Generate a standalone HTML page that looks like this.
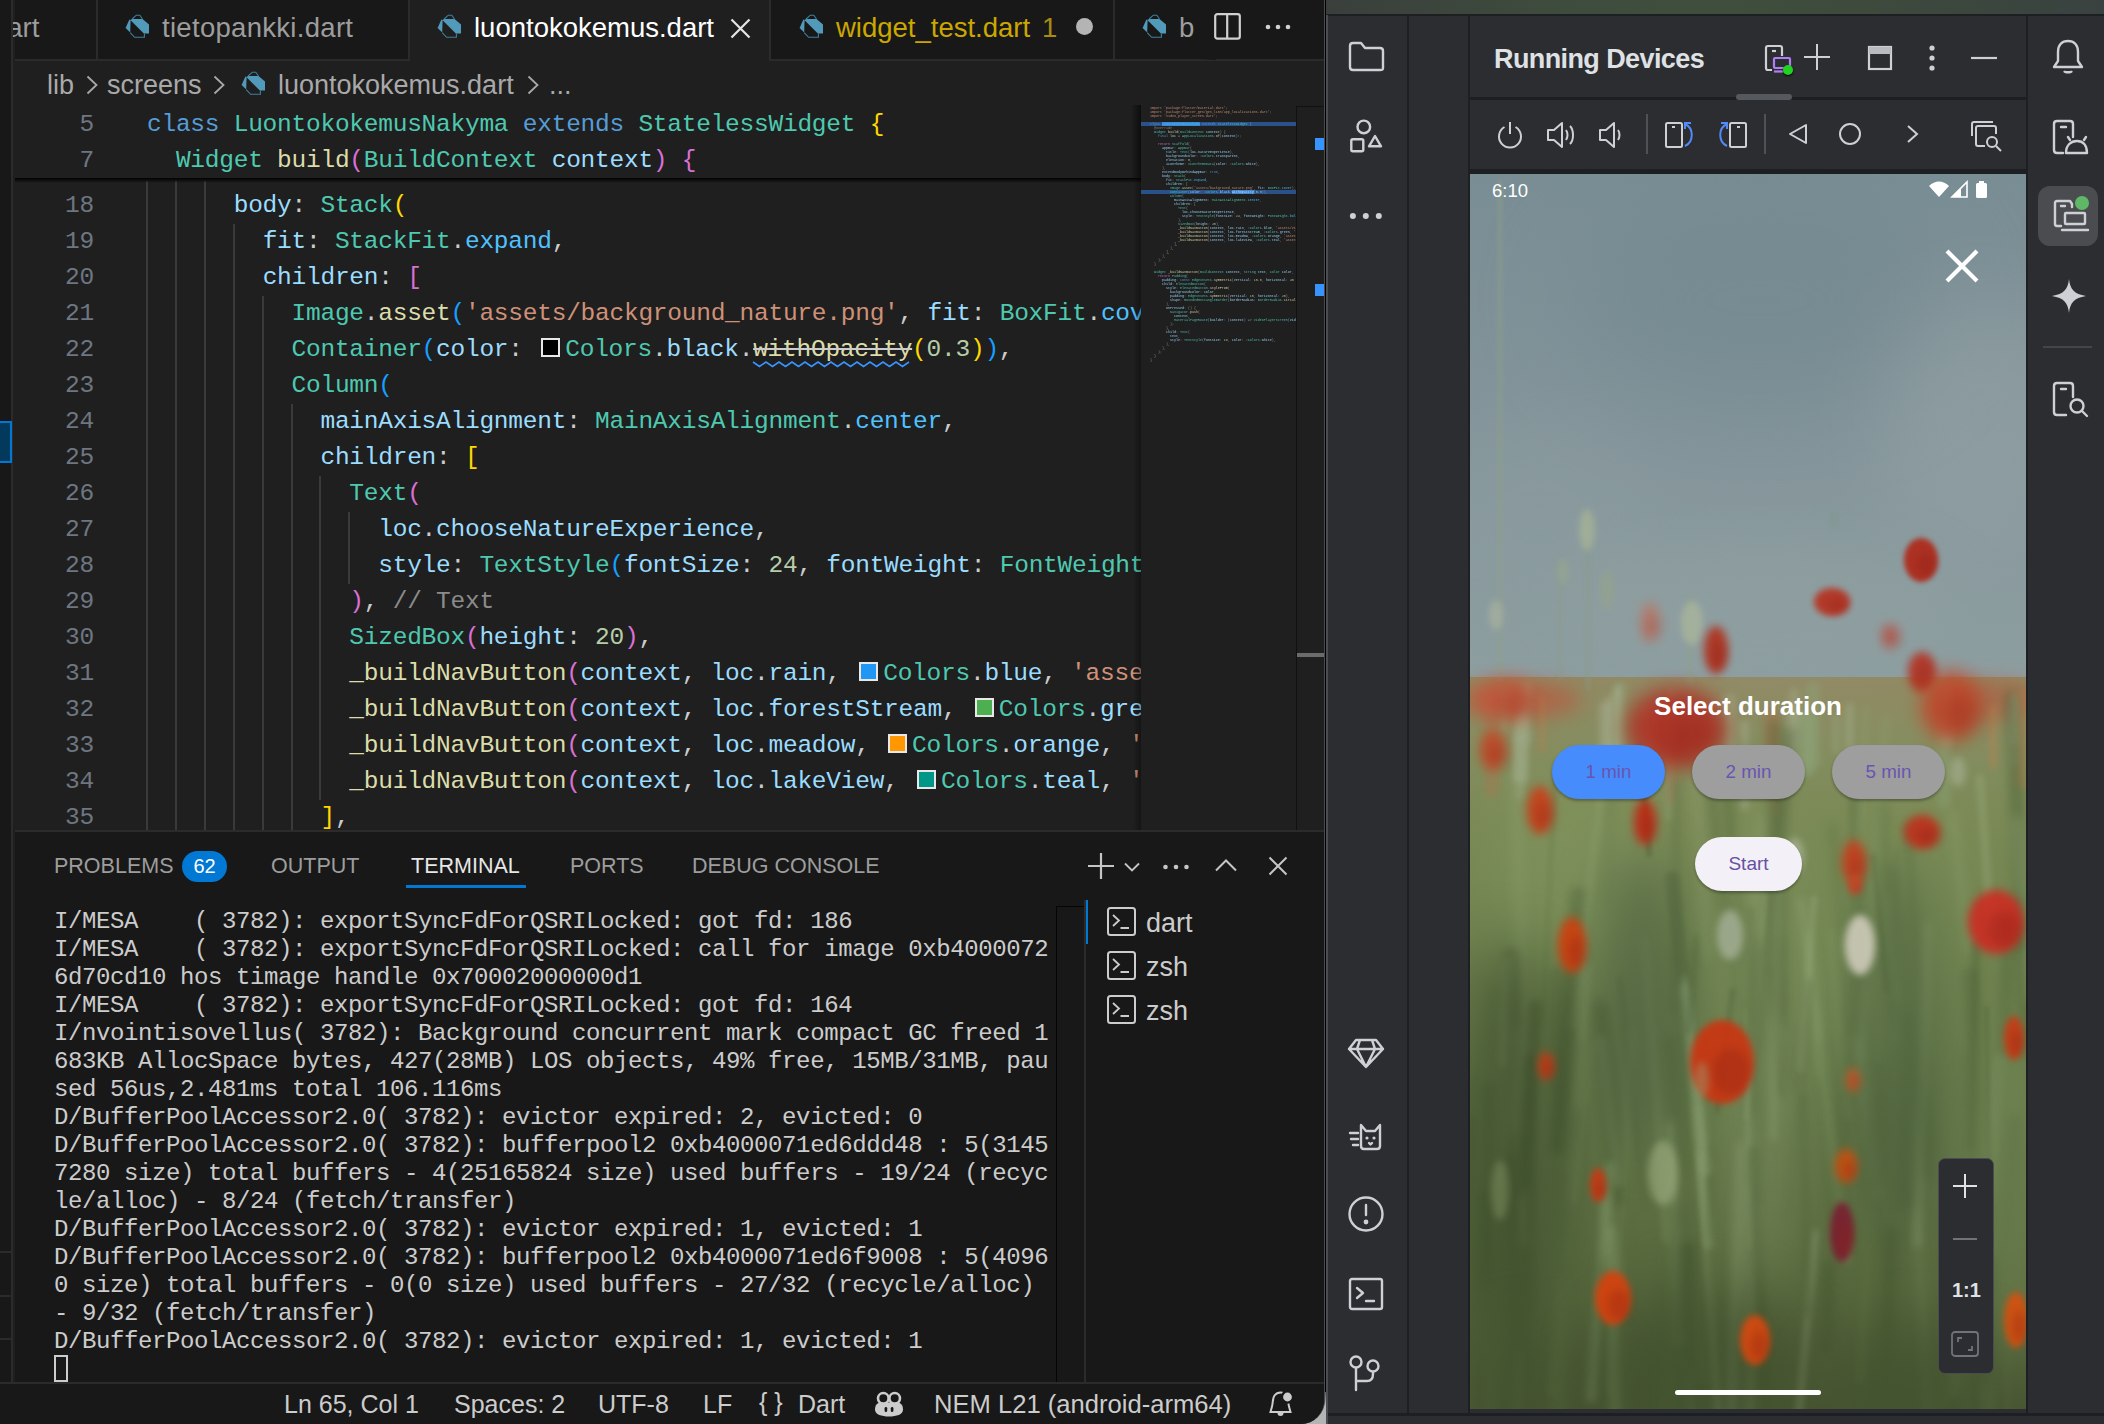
<!DOCTYPE html><html><head><meta charset="utf-8"><style>
*{box-sizing:border-box;margin:0;padding:0}
html,body{width:2104px;height:1424px;overflow:hidden;background:#000}
body{position:relative;font-family:"Liberation Sans", sans-serif}
.a{position:absolute}
.code{position:absolute;font-family:"Liberation Mono", monospace;font-size:24.5px;letter-spacing:-0.25px;white-space:pre;color:#cccccc;line-height:36px;height:36px}
.ln{position:absolute;font-family:"Liberation Mono", monospace;font-size:24.5px;letter-spacing:-0.25px;color:#6e7681;text-align:right;width:80px;line-height:36px;height:36px}
.k{color:#569cd6} .t{color:#4ec9b0} .f{color:#dcdcaa} .v{color:#9cdcfe} .s{color:#ce9178}
.n{color:#b5cea8} .c{color:#8b8b8b} .e{color:#4fc1ff}
.b1{color:#ffd700} .b2{color:#da70d6} .b3{color:#179fff}
.sw{display:inline-block;width:28px;height:20px;vertical-align:-2px;position:relative}
.sw i{position:absolute;left:4px;top:0;width:19px;height:19px;border:2px solid #e8e8e8}
.wo{text-decoration:line-through;text-decoration-color:#cccccc;text-decoration-thickness:2px}
.term{position:absolute;font-family:"Liberation Mono", monospace;font-size:24px;letter-spacing:-0.4px;white-space:pre;color:#cccccc;line-height:28px}
.ui{position:absolute;font-family:"Liberation Sans", sans-serif;white-space:pre}
.ic{position:absolute;overflow:visible}
.mm{position:absolute;font-family:"Liberation Mono", monospace;font-size:3.4px;letter-spacing:-0.04px;line-height:4px;white-space:pre;color:#9a9a9a}
.mm div{height:4px}
</style></head><body>
<div class="a" style="left:1296px;top:1392px;width:30px;height:32px;background:linear-gradient(180deg,#5a5a5a,#b4b4b4 40%)"></div>
<div class="a" style="left:0;top:0;width:1325px;height:1424px;background:#1f1f1f;border-bottom-right-radius:24px;overflow:hidden;border-right:1px solid #4a4a4a">
<div class="a" style="left:0;top:0;width:13px;height:1424px;background:#181818;border-right:2px solid #2b2b2b"></div>
<div class="a" style="left:0;top:421px;width:12px;height:42px;background:#04395e;border:2px solid #0078d4;border-left:none"></div>
<div class="a" style="left:0;top:1251px;width:12px;height:2px;background:#2b2b2b"></div>
<div class="a" style="left:0;top:1295px;width:12px;height:2px;background:#2b2b2b"></div>
<div class="a" style="left:0;top:1338px;width:12px;height:2px;background:#2b2b2b"></div>
<div class="a" style="left:15px;top:0;width:1310px;height:61px;background:#181818;border-bottom:2px solid #2b2b2b"></div>
<div class="a" style="left:96px;top:0;width:2px;height:60px;background:#2b2b2b"></div>
<div class="a" style="left:1113px;top:0;width:2px;height:60px;background:#2b2b2b"></div>
<div class="a" style="left:408px;top:0;width:363px;height:61px;background:#1f1f1f;border-left:2px solid #2b2b2b;border-right:2px solid #2b2b2b"></div>
<div class="ui" style="left:-8px;top:11px;font-size:27.5px;color:#9d9d9d;line-height:34px">dart</div>
<div class="a" style="left:0;top:0;width:13px;height:60px;background:#181818;border-right:2px solid #2b2b2b"></div>
<svg class="ic" style="left:120px;top:10px" width="36" height="32" viewBox="0 0 36 32"><path d="M10.3 9.9 L12.1 9 L22.5 9 L29 14.4 L29 23.6 L23.8 23.6 Z" fill="#519aba"/><path d="M9.4 9.4 L10.6 9.9 L10.2 22.6 L5.6 18 Z" fill="#519aba"/><path d="M12.1 9 L16.3 5.2 L19.8 5.2 L22.5 9 M10.2 22.6 L14.6 27.3 L24.4 27.3 L24.4 23.6" fill="none" stroke="#3f7f9c" stroke-width="1.1"/></svg>
<div class="ui" style="left:162px;top:11px;font-size:27.5px;color:#9d9d9d;line-height:34px;letter-spacing:0.3px">tietopankki.dart</div>
<svg class="ic" style="left:432px;top:10px" width="36" height="32" viewBox="0 0 36 32"><path d="M10.3 9.9 L12.1 9 L22.5 9 L29 14.4 L29 23.6 L23.8 23.6 Z" fill="#519aba"/><path d="M9.4 9.4 L10.6 9.9 L10.2 22.6 L5.6 18 Z" fill="#519aba"/><path d="M12.1 9 L16.3 5.2 L19.8 5.2 L22.5 9 M10.2 22.6 L14.6 27.3 L24.4 27.3 L24.4 23.6" fill="none" stroke="#3f7f9c" stroke-width="1.1"/></svg>
<div class="ui" style="left:474px;top:11px;font-size:27.5px;color:#ffffff;line-height:34px">luontokokemus.dart</div>
<svg class="ic" style="left:730px;top:18px" width="21" height="21" viewBox="0 0 21 21"><path d="M1.5 1.5L19.5 19.5M19.5 1.5L1.5 19.5" stroke="#e6e6e6" stroke-width="2.2"/></svg>
<svg class="ic" style="left:794px;top:10px" width="36" height="32" viewBox="0 0 36 32"><path d="M10.3 9.9 L12.1 9 L22.5 9 L29 14.4 L29 23.6 L23.8 23.6 Z" fill="#519aba"/><path d="M9.4 9.4 L10.6 9.9 L10.2 22.6 L5.6 18 Z" fill="#519aba"/><path d="M12.1 9 L16.3 5.2 L19.8 5.2 L22.5 9 M10.2 22.6 L14.6 27.3 L24.4 27.3 L24.4 23.6" fill="none" stroke="#3f7f9c" stroke-width="1.1"/></svg>
<div class="ui" style="left:836px;top:11px;font-size:27.5px;color:#cca700;line-height:34px">widget_test.dart</div>
<div class="ui" style="left:1042px;top:11px;font-size:27.5px;color:#a98c10;line-height:34px">1</div>
<div class="a" style="left:1076px;top:18px;width:17px;height:17px;border-radius:50%;background:#b4b4b4"></div>
<svg class="ic" style="left:1137px;top:10px" width="36" height="32" viewBox="0 0 36 32"><path d="M10.3 9.9 L12.1 9 L22.5 9 L29 14.4 L29 23.6 L23.8 23.6 Z" fill="#519aba"/><path d="M9.4 9.4 L10.6 9.9 L10.2 22.6 L5.6 18 Z" fill="#519aba"/><path d="M12.1 9 L16.3 5.2 L19.8 5.2 L22.5 9 M10.2 22.6 L14.6 27.3 L24.4 27.3 L24.4 23.6" fill="none" stroke="#3f7f9c" stroke-width="1.1"/></svg>
<div class="ui" style="left:1179px;top:11px;font-size:27.5px;color:#9d9d9d;line-height:34px">b</div>
<div class="a" style="left:1196px;top:0;width:20px;height:60px;background:linear-gradient(90deg,rgba(24,24,24,0),#181818)"></div>
<svg class="ic" style="left:1214px;top:13px" width="27" height="27" viewBox="0 0 27 27"><rect x="1.2" y="1.2" width="24.6" height="24.4" rx="2.2" fill="none" stroke="#d0d0d0" stroke-width="2.2"/><path d="M13.2 2V26" stroke="#d0d0d0" stroke-width="2.2"/></svg>
<svg class="ic" style="left:1264px;top:23px" width="30" height="8" viewBox="0 0 30 8"><circle cx="4" cy="4" r="2.3" fill="#d0d0d0"/><circle cx="14" cy="4" r="2.3" fill="#d0d0d0"/><circle cx="24" cy="4" r="2.3" fill="#d0d0d0"/></svg>
<div class="ui" style="left:47px;top:69px;font-size:27px;color:#a9a9a9;line-height:32px">lib</div>
<svg class="ic" style="left:86px;top:75px" width="12" height="20" viewBox="0 0 12 20"><path d="M1.5 1.5L10.5 10L1.5 18.5" fill="none" stroke="#a9a9a9" stroke-width="1.8"/></svg>
<div class="ui" style="left:107px;top:69px;font-size:27px;color:#a9a9a9;line-height:32px">screens</div>
<svg class="ic" style="left:213px;top:75px" width="12" height="20" viewBox="0 0 12 20"><path d="M1.5 1.5L10.5 10L1.5 18.5" fill="none" stroke="#a9a9a9" stroke-width="1.8"/></svg>
<svg class="ic" style="left:236px;top:67px" width="36" height="32" viewBox="0 0 36 32"><path d="M10.3 9.9 L12.1 9 L22.5 9 L29 14.4 L29 23.6 L23.8 23.6 Z" fill="#519aba"/><path d="M9.4 9.4 L10.6 9.9 L10.2 22.6 L5.6 18 Z" fill="#519aba"/><path d="M12.1 9 L16.3 5.2 L19.8 5.2 L22.5 9 M10.2 22.6 L14.6 27.3 L24.4 27.3 L24.4 23.6" fill="none" stroke="#3f7f9c" stroke-width="1.1"/></svg>
<div class="ui" style="left:278px;top:69px;font-size:27px;color:#a9a9a9;line-height:32px">luontokokemus.dart</div>
<svg class="ic" style="left:527px;top:75px" width="12" height="20" viewBox="0 0 12 20"><path d="M1.5 1.5L10.5 10L1.5 18.5" fill="none" stroke="#a9a9a9" stroke-width="1.8"/></svg>
<div class="ui" style="left:549px;top:69px;font-size:27px;color:#a9a9a9;line-height:32px">...</div>
<div class="a" style="left:15px;top:181px;width:1126px;height:650px;overflow:hidden">
<div class="a" style="left:131.0px;top:0px;width:2px;height:655px;background:#3a3a3a"></div>
<div class="a" style="left:159.9px;top:0px;width:2px;height:655px;background:#3a3a3a"></div>
<div class="a" style="left:188.8px;top:0px;width:2px;height:655px;background:#3a3a3a"></div>
<div class="a" style="left:217.7px;top:43px;width:2px;height:612px;background:#3a3a3a"></div>
<div class="a" style="left:246.6px;top:115px;width:2px;height:540px;background:#3a3a3a"></div>
<div class="a" style="left:275.5px;top:223px;width:2px;height:432px;background:#3a3a3a"></div>
<div class="a" style="left:304.4px;top:295px;width:2px;height:324px;background:#3a3a3a"></div>
<div class="a" style="left:333.3px;top:331px;width:2px;height:72px;background:#3a3a3a"></div>
<div class="ln" style="left:-1px;top:7px">18</div>
<div class="code" style="left:132px;top:7px">      <span class="v">body</span>: <span class="t">Stack</span><span class="b1">(</span></div>
<div class="ln" style="left:-1px;top:43px">19</div>
<div class="code" style="left:132px;top:43px">        <span class="v">fit</span>: <span class="t">StackFit</span>.<span class="e">expand</span>,</div>
<div class="ln" style="left:-1px;top:79px">20</div>
<div class="code" style="left:132px;top:79px">        <span class="v">children</span>: <span class="b2">[</span></div>
<div class="ln" style="left:-1px;top:115px">21</div>
<div class="code" style="left:132px;top:115px">          <span class="t">Image</span>.<span class="f">asset</span><span class="b3">(</span><span class="s">&#x27;assets/background_nature.png&#x27;</span>, <span class="v">fit</span>: <span class="t">BoxFit</span>.<span class="e">cover</span><span class="b3">)</span>,</div>
<div class="ln" style="left:-1px;top:151px">22</div>
<div class="code" style="left:132px;top:151px">          <span class="t">Container</span><span class="b3">(</span><span class="v">color</span>: <span class="sw"><i style="background:#000000"></i></span><span class="t">Colors</span>.<span class="v">black</span>.<span class="f wo">withOpacity</span><span class="b1">(</span><span class="n">0.3</span><span class="b1">)</span><span class="b3">)</span>,</div>
<div class="ln" style="left:-1px;top:187px">23</div>
<div class="code" style="left:132px;top:187px">          <span class="t">Column</span><span class="b3">(</span></div>
<div class="ln" style="left:-1px;top:223px">24</div>
<div class="code" style="left:132px;top:223px">            <span class="v">mainAxisAlignment</span>: <span class="t">MainAxisAlignment</span>.<span class="e">center</span>,</div>
<div class="ln" style="left:-1px;top:259px">25</div>
<div class="code" style="left:132px;top:259px">            <span class="v">children</span>: <span class="b1">[</span></div>
<div class="ln" style="left:-1px;top:295px">26</div>
<div class="code" style="left:132px;top:295px">              <span class="t">Text</span><span class="b2">(</span></div>
<div class="ln" style="left:-1px;top:331px">27</div>
<div class="code" style="left:132px;top:331px">                <span class="v">loc</span>.<span class="v">chooseNatureExperience</span>,</div>
<div class="ln" style="left:-1px;top:367px">28</div>
<div class="code" style="left:132px;top:367px">                <span class="v">style</span>: <span class="t">TextStyle</span><span class="b3">(</span><span class="v">fontSize</span>: <span class="n">24</span>, <span class="v">fontWeight</span>: <span class="t">FontWeight</span>.<span class="e">bold</span></div>
<div class="ln" style="left:-1px;top:403px">29</div>
<div class="code" style="left:132px;top:403px">              <span class="b2">)</span>, <span class="c">// Text</span></div>
<div class="ln" style="left:-1px;top:439px">30</div>
<div class="code" style="left:132px;top:439px">              <span class="t">SizedBox</span><span class="b2">(</span><span class="v">height</span>: <span class="n">20</span><span class="b2">)</span>,</div>
<div class="ln" style="left:-1px;top:475px">31</div>
<div class="code" style="left:132px;top:475px">              <span class="f">_buildNavButton</span><span class="b2">(</span><span class="v">context</span>, <span class="v">loc</span>.<span class="v">rain</span>, <span class="sw"><i style="background:#2196f3"></i></span><span class="t">Colors</span>.<span class="v">blue</span>, <span class="s">&#x27;assets/videos&#x27;</span></div>
<div class="ln" style="left:-1px;top:511px">32</div>
<div class="code" style="left:132px;top:511px">              <span class="f">_buildNavButton</span><span class="b2">(</span><span class="v">context</span>, <span class="v">loc</span>.<span class="v">forestStream</span>, <span class="sw"><i style="background:#4caf50"></i></span><span class="t">Colors</span>.<span class="v">green</span></div>
<div class="ln" style="left:-1px;top:547px">33</div>
<div class="code" style="left:132px;top:547px">              <span class="f">_buildNavButton</span><span class="b2">(</span><span class="v">context</span>, <span class="v">loc</span>.<span class="v">meadow</span>, <span class="sw"><i style="background:#ff9800"></i></span><span class="t">Colors</span>.<span class="v">orange</span>, <span class="s">&#x27;assets&#x27;</span></div>
<div class="ln" style="left:-1px;top:583px">34</div>
<div class="code" style="left:132px;top:583px">              <span class="f">_buildNavButton</span><span class="b2">(</span><span class="v">context</span>, <span class="v">loc</span>.<span class="v">lakeView</span>, <span class="sw"><i style="background:#009688"></i></span><span class="t">Colors</span>.<span class="v">teal</span>, <span class="s">&#x27;assets&#x27;</span></div>
<div class="ln" style="left:-1px;top:619px">35</div>
<div class="code" style="left:132px;top:619px">            <span class="b1">]</span>,</div>
<svg class="ic" style="left:738.0px;top:180px" width="159" height="6" viewBox="0 0 159 6"><path d="M0.0 1 L6.5 5.5 L13.0 1 L19.5 5.5 L26.0 1 L32.5 5.5 L39.0 1 L45.5 5.5 L52.0 1 L58.5 5.5 L65.0 1 L71.5 5.5 L78.0 1 L84.5 5.5 L91.0 1 L97.5 5.5 L104.0 1 L110.5 5.5 L117.0 1 L123.5 5.5 L130.0 1 L136.5 5.5 L143.0 1 L149.5 5.5 L156.0 1" fill="none" stroke="#3794ff" stroke-width="1.6"/></svg>
</div>
<div class="a" style="left:15px;top:105px;width:1126px;height:73px;background:#1f1f1f"></div>
<div class="a" style="left:15px;top:178px;width:1126px;height:5px;background:linear-gradient(180deg,rgba(0,0,0,0.95),rgba(0,0,0,0))"></div>
<div class="ln" style="left:14px;top:107px">5</div>
<div class="code" style="left:147px;top:107px"><span class="k">class</span> <span class="t">LuontokokemusNakyma</span> <span class="k">extends</span> <span class="t">StatelessWidget</span> <span class="b1">{</span></div>
<div class="ln" style="left:14px;top:143px">7</div>
<div class="code" style="left:147px;top:143px">  <span class="t">Widget</span> <span class="f">build</span><span class="b2">(</span><span class="t">BuildContext</span> <span class="v">context</span><span class="b2">)</span> <span class="b2">{</span></div>
<div class="a" style="left:1141px;top:105px;width:156px;height:726px;background:#1f1f1f;overflow:hidden">
<div class="a" style="left:0;top:17px;width:155px;height:4px;background:#2a5189"></div>
<div class="a" style="left:21px;top:17px;width:38px;height:4px;background:#3b86e0"></div>
<div class="a" style="left:0;top:85px;width:155px;height:4px;background:#2a5189"></div>
<div class="a" style="left:91px;top:85px;width:22px;height:4px;background:#3b86e0"></div>
<div class="mm" style="left:9px;top:0.5px;opacity:0.9"><div><span class="s">import &#x27;package:flutter/material.dart&#x27;;</span></div><div><span class="s">import &#x27;package:flutter_gen/gen_l10n/app_localizations.dart&#x27;;</span></div><div><span class="s">import &#x27;video_player_screen.dart&#x27;;</span></div><div></div><div><span class="k">class</span> <span class="t">LuontokokemusNakyma</span> <span class="k">extends</span> <span class="t">StatelessWidget</span> {</div><div>  <span class="c">@override</span></div><div>  <span class="t">Widget</span> <span class="f">build</span>(<span class="t">BuildContext</span> <span class="v">context</span>) {</div><div>    <span class="k">final</span> <span class="v">loc</span> = <span class="t">AppLocalizations</span>.<span class="f">of</span>(<span class="v">context</span>)!;</div><div></div><div>    <span class="b2">return</span> <span class="t">Scaffold</span>(</div><div>      <span class="v">appBar</span>: <span class="t">AppBar</span>(</div><div>        <span class="v">title</span>: <span class="t">Text</span>(<span class="v">loc.natureExperience</span>),</div><div>        <span class="v">backgroundColor</span>: <span class="c">#</span><span class="t">Colors</span>.<span class="v">transparent</span>,</div><div>        <span class="v">elevation</span>: <span class="n">0</span>,</div><div>        <span class="v">iconTheme</span>: <span class="t">IconThemeData</span>(<span class="v">color</span>: <span class="c">#</span><span class="t">Colors</span>.<span class="v">white</span>),</div><div>      ),</div><div>      <span class="v">extendBodyBehindAppBar</span>: <span class="k">true</span>,</div><div>      <span class="v">body</span>: <span class="t">Stack</span>(</div><div>        <span class="v">fit</span>: <span class="t">StackFit</span>.<span class="e">expand</span>,</div><div>        <span class="v">children</span>: [</div><div>          <span class="t">Image</span>.<span class="f">asset</span>(<span class="s">&#x27;assets/background_nature.png&#x27;</span>, <span class="v">fit</span>: <span class="t">BoxFit</span>.<span class="e">cover</span>),</div><div>          <span class="t">Container</span>(<span class="v">color</span>: <span class="c">#</span><span class="t">Colors</span>.<span class="v">black</span>.<span class="f">withOpacity</span>(<span class="n">0.3</span>)),</div><div>          <span class="t">Column</span>(</div><div>            <span class="v">mainAxisAlignment</span>: <span class="t">MainAxisAlignment</span>.<span class="e">center</span>,</div><div>            <span class="v">children</span>: [</div><div>              <span class="t">Text</span>(</div><div>                <span class="v">loc.chooseNatureExperience</span>,</div><div>                <span class="v">style</span>: <span class="t">TextStyle</span>(<span class="v">fontSize</span>: <span class="n">24</span>, <span class="v">fontWeight</span>: <span class="t">FontWeight</span>.<span class="e">bold</span>, color</div><div>              ),</div><div>              <span class="t">SizedBox</span>(<span class="v">height</span>: <span class="n">20</span>),</div><div>              <span class="f">_buildNavButton</span>(<span class="v">context</span>, <span class="v">loc.rain</span>, <span class="c">#</span><span class="t">Colors</span>.<span class="v">blue</span>, <span class="s">&#x27;assets/vid</span></div><div>              <span class="f">_buildNavButton</span>(<span class="v">context</span>, <span class="v">loc.forestStream</span>, <span class="c">#</span><span class="t">Colors</span>.<span class="v">green</span>, <span class="s">&#x27;</span></div><div>              <span class="f">_buildNavButton</span>(<span class="v">context</span>, <span class="v">loc.meadow</span>, <span class="c">#</span><span class="t">Colors</span>.<span class="v">orange</span>, <span class="s">&#x27;asset</span></div><div>              <span class="f">_buildNavButton</span>(<span class="v">context</span>, <span class="v">loc.lakeView</span>, <span class="c">#</span><span class="t">Colors</span>.<span class="v">teal</span>, <span class="s">&#x27;asset</span></div><div>            ],</div><div>          ),</div><div>        ],</div><div>      ),</div><div>    );</div><div>  }</div><div></div><div>  <span class="t">Widget</span> <span class="f">_buildNavButton</span>(<span class="t">BuildContext</span> <span class="v">context</span>, <span class="t">String</span> <span class="v">text</span>, <span class="t">Color</span> <span class="v">color</span>, </div><div>    <span class="b2">return</span> <span class="t">Padding</span>(</div><div>      <span class="v">padding</span>: <span class="k">const</span> <span class="t">EdgeInsets</span>.<span class="f">symmetric</span>(<span class="v">vertical</span>: <span class="n">10.0</span>, <span class="v">horizontal</span>: <span class="n">40</span></div><div>      <span class="v">child</span>: <span class="t">ElevatedButton</span>(</div><div>        <span class="v">style</span>: <span class="t">ElevatedButton</span>.<span class="f">styleFrom</span>(</div><div>          <span class="v">backgroundColor</span>: <span class="v">color</span>,</div><div>          <span class="v">padding</span>: <span class="t">EdgeInsets</span>.<span class="f">symmetric</span>(<span class="v">vertical</span>: <span class="n">15</span>, <span class="v">horizontal</span>: <span class="n">20</span>),</div><div>          <span class="v">shape</span>: <span class="t">RoundedRectangleBorder</span>(<span class="v">borderRadius</span>: <span class="t">BorderRadius</span>.<span class="f">circular</span></div><div>        ),</div><div>        <span class="v">onPressed</span>: () {</div><div>          <span class="t">Navigator</span>.<span class="f">push</span>(</div><div>            <span class="v">context</span>,</div><div>            <span class="t">MaterialPageRoute</span>(<span class="v">builder</span>: (<span class="v">context</span>) =&gt; <span class="t">VideoPlayerScreen</span>(<span class="v">vid</span></div><div>          );</div><div>        },</div><div>        <span class="v">child</span>: <span class="t">Text</span>(</div><div>          <span class="v">text</span>,</div><div>          <span class="v">style</span>: <span class="t">TextStyle</span>(<span class="v">fontSize</span>: <span class="n">18</span>, <span class="v">color</span>: <span class="c">#</span><span class="t">Colors</span>.<span class="v">white</span>),</div><div>        ),</div><div>      ),</div><div>    );</div><div>  }</div><div>}</div></div>
</div>
<div class="a" style="left:1131px;top:105px;width:10px;height:73px;background:linear-gradient(90deg,rgba(0,0,0,0),rgba(0,0,0,0.6))"></div>
<div class="a" style="left:1133px;top:178px;width:8px;height:652px;background:linear-gradient(90deg,rgba(0,0,0,0),rgba(0,0,0,0.35))"></div>
<div class="a" style="left:1296px;top:106px;width:29px;height:725px;background:#1f1f1f;border-left:1px solid #111;border-top:1px solid #111"></div>
<div class="a" style="left:1315px;top:138px;width:9px;height:12px;background:#3794ff"></div>
<div class="a" style="left:1315px;top:284px;width:9px;height:12px;background:#3794ff"></div>
<div class="a" style="left:1297px;top:653px;width:27px;height:4px;background:#6b6b6b"></div>
<div class="a" style="left:15px;top:830px;width:1310px;height:553px;background:#181818;border-top:2px solid #2b2b2b"></div>
<div class="ui" style="left:54px;top:852px;font-size:21.5px;color:#9d9d9d;line-height:28px">PROBLEMS</div>
<div class="ui" style="left:271px;top:852px;font-size:21.5px;color:#9d9d9d;line-height:28px">OUTPUT</div>
<div class="ui" style="left:411px;top:852px;font-size:21.5px;color:#e7e7e7;line-height:28px">TERMINAL</div>
<div class="ui" style="left:570px;top:852px;font-size:21.5px;color:#9d9d9d;line-height:28px">PORTS</div>
<div class="ui" style="left:692px;top:852px;font-size:21.5px;color:#9d9d9d;line-height:28px">DEBUG CONSOLE</div>
<div class="a" style="left:182px;top:851px;width:45px;height:31px;border-radius:16px;background:#0078d4;color:#fff;font-size:20px;line-height:31px;text-align:center;font-family:'Liberation Sans'">62</div>
<div class="a" style="left:406px;top:885px;width:120px;height:3px;background:#0078d4"></div>
<svg class="ic" style="left:1088px;top:853px" width="26" height="26" viewBox="0 0 26 26"><path d="M13 0V26M0 13H26" stroke="#c5c5c5" stroke-width="2.2"/></svg>
<svg class="ic" style="left:1124px;top:862px" width="16" height="10" viewBox="0 0 16 10"><path d="M1 1.5L8 8.5L15 1.5" fill="none" stroke="#c5c5c5" stroke-width="1.8"/></svg>
<svg class="ic" style="left:1162px;top:863px" width="28" height="8" viewBox="0 0 28 8"><circle cx="3.5" cy="4" r="2.3" fill="#c5c5c5"/><circle cx="14" cy="4" r="2.3" fill="#c5c5c5"/><circle cx="24.5" cy="4" r="2.3" fill="#c5c5c5"/></svg>
<svg class="ic" style="left:1215px;top:859px" width="22" height="13" viewBox="0 0 22 13"><path d="M1 11.5L11 1.5L21 11.5" fill="none" stroke="#c5c5c5" stroke-width="2"/></svg>
<svg class="ic" style="left:1268px;top:856px" width="20" height="20" viewBox="0 0 20 20"><path d="M1.5 1.5L18.5 18.5M18.5 1.5L1.5 18.5" stroke="#c5c5c5" stroke-width="2"/></svg>
<div class="term" style="left:54px;top:908px">I/MESA    ( 3782): exportSyncFdForQSRILocked: got fd: 186
I/MESA    ( 3782): exportSyncFdForQSRILocked: call for image 0xb4000072
6d70cd10 hos timage handle 0x70002000000d1
I/MESA    ( 3782): exportSyncFdForQSRILocked: got fd: 164
I/nvointisovellus( 3782): Background concurrent mark compact GC freed 1
683KB AllocSpace bytes, 427(28MB) LOS objects, 49% free, 15MB/31MB, pau
sed 56us,2.481ms total 106.116ms
D/BufferPoolAccessor2.0( 3782): evictor expired: 2, evicted: 0
D/BufferPoolAccessor2.0( 3782): bufferpool2 0xb4000071ed6ddd48 : 5(3145
7280 size) total buffers - 4(25165824 size) used buffers - 19/24 (recyc
le/alloc) - 8/24 (fetch/transfer)
D/BufferPoolAccessor2.0( 3782): evictor expired: 1, evicted: 1
D/BufferPoolAccessor2.0( 3782): bufferpool2 0xb4000071ed6f9008 : 5(4096
0 size) total buffers - 0(0 size) used buffers - 27/32 (recycle/alloc)
- 9/32 (fetch/transfer)
D/BufferPoolAccessor2.0( 3782): evictor expired: 1, evicted: 1</div>
<div class="a" style="left:54px;top:1355px;width:14px;height:27px;border:2px solid #cccccc"></div>
<div class="a" style="left:1056px;top:906px;width:29px;height:477px;border-left:1px solid #050505;border-top:1px solid #050505"></div>
<div class="a" style="left:1084px;top:900px;width:2px;height:483px;background:#2b2b2b"></div>
<div class="a" style="left:1086px;top:900px;width:2px;height:44px;background:#0078d4"></div>
<svg class="ic" style="left:1107px;top:907px" width="29" height="29" viewBox="0 0 29 29"><rect x="1" y="1" width="27" height="27" rx="2.5" fill="none" stroke="#cccccc" stroke-width="2"/><path d="M6 8L12 13.5L6 19" fill="none" stroke="#cccccc" stroke-width="1.8"/><path d="M13.5 21H22" stroke="#cccccc" stroke-width="2"/></svg>
<div class="ui" style="left:1146px;top:906px;font-size:27px;color:#cccccc;line-height:34px">dart</div>
<svg class="ic" style="left:1107px;top:951px" width="29" height="29" viewBox="0 0 29 29"><rect x="1" y="1" width="27" height="27" rx="2.5" fill="none" stroke="#cccccc" stroke-width="2"/><path d="M6 8L12 13.5L6 19" fill="none" stroke="#cccccc" stroke-width="1.8"/><path d="M13.5 21H22" stroke="#cccccc" stroke-width="2"/></svg>
<div class="ui" style="left:1146px;top:950px;font-size:27px;color:#cccccc;line-height:34px">zsh</div>
<svg class="ic" style="left:1107px;top:995px" width="29" height="29" viewBox="0 0 29 29"><rect x="1" y="1" width="27" height="27" rx="2.5" fill="none" stroke="#cccccc" stroke-width="2"/><path d="M6 8L12 13.5L6 19" fill="none" stroke="#cccccc" stroke-width="1.8"/><path d="M13.5 21H22" stroke="#cccccc" stroke-width="2"/></svg>
<div class="ui" style="left:1146px;top:994px;font-size:27px;color:#cccccc;line-height:34px">zsh</div>
<div class="a" style="left:0;top:1382px;width:1325px;height:42px;background:#181818;border-top:2px solid #2b2b2b"></div>
<div class="ui" style="left:284px;top:1389px;font-size:25px;color:#cccccc;line-height:30px">Ln 65, Col 1</div>
<div class="ui" style="left:454px;top:1389px;font-size:25px;color:#cccccc;line-height:30px">Spaces: 2</div>
<div class="ui" style="left:598px;top:1389px;font-size:25px;color:#cccccc;line-height:30px">UTF-8</div>
<div class="ui" style="left:703px;top:1389px;font-size:25px;color:#cccccc;line-height:30px">LF</div>
<div class="ui" style="left:798px;top:1389px;font-size:25px;color:#cccccc;line-height:30px">Dart</div>
<div class="ui" style="left:934px;top:1389px;font-size:25.6px;color:#cccccc;line-height:30px">NEM L21 (android-arm64)</div>
<div class="ui" style="left:759px;top:1387px;font-size:25px;color:#cccccc;line-height:30px">{ }</div>
<svg class="ic" style="left:873px;top:1390px" width="32" height="28" viewBox="0 0 32 28"><path d="M2 19.5 C2 15 4.5 12.5 8 12.5 L24 12.5 C27.5 12.5 30 15 30 19.5 C30 24.5 23.5 26.5 16 26.5 C8.5 26.5 2 24.5 2 19.5 Z" fill="#cccccc"/><circle cx="10.3" cy="8.3" r="5.3" fill="#181818" stroke="#cccccc" stroke-width="2.6"/><circle cx="21.7" cy="8.3" r="5.3" fill="#181818" stroke="#cccccc" stroke-width="2.6"/><rect x="11.6" y="17" width="2.6" height="5" rx="1.3" fill="#181818"/><rect x="17.8" y="17" width="2.6" height="5" rx="1.3" fill="#181818"/></svg>
<svg class="ic" style="left:1266px;top:1388px" width="30" height="32" viewBox="0 0 30 32"><path d="M4.5 24 L24.5 24 L23 18.5 C22 15 22.5 10 20.5 7.5 C19 5.5 17 4.5 14.5 4.5 C12 4.5 10 5.5 8.5 7.5 C6.5 10 7 15 6 18.5 Z" fill="none" stroke="#cccccc" stroke-width="2"/><path d="M11.5 25 A3 3 0 0 0 17.5 25 Z" fill="#cccccc"/><circle cx="21.5" cy="9" r="5.6" fill="#cccccc" stroke="#181818" stroke-width="2.4"/></svg>
</div>
<div class="a" style="left:1326px;top:0;width:778px;height:1424px;background:#2b2d30">
<div class="a" style="left:0;top:0;width:778px;height:15px;background:linear-gradient(90deg,#3a3f3c,#3e4c3d 30%,#3f4e3d 50%,#3d4a3c 70%,#394240)"></div>
<div class="a" style="left:0;top:14px;width:778px;height:2px;background:#1e1f22"></div>
<div class="a" style="left:0;top:15px;width:2px;height:1409px;background:#4a4d52"></div>
<div class="a" style="left:81px;top:16px;width:2px;height:1398px;background:#1e1f22"></div>
<div class="a" style="left:142px;top:16px;width:2px;height:1398px;background:#1e1f22"></div>
<div class="a" style="left:700px;top:16px;width:2px;height:1398px;background:#1e1f22"></div>
<div class="a" style="left:144px;top:97px;width:556px;height:3px;background:#1e1f22"></div>
<div class="a" style="left:144px;top:169px;width:556px;height:5px;background:#1e1f22"></div>
<div class="a" style="left:2px;top:1413px;width:776px;height:3px;background:#1e1f22"></div>
<div class="ui" style="left:168px;top:42px;font-size:27px;font-weight:bold;letter-spacing:-0.6px;color:#dfe1e5;line-height:34px">Running Devices</div>
<div class="a" style="left:410px;top:94px;width:56px;height:6px;border-radius:3px;background:#55585d"></div>
<svg class="ic" style="left:21px;top:40px" width="38" height="32" viewBox="0 0 38 32"><path d="M3 6 C3 4 4 3 6 3 H14 L18 8 H33 C35 8 36 9 36 11 V28 C36 30 35 30 33 30 H6 C4 30 3 29 3 27 Z" fill="none" stroke="#ced0d6" stroke-width="2.4" stroke-linecap="round" stroke-linejoin="round"/></svg>
<svg class="ic" style="left:23px;top:118px" width="36" height="36" viewBox="0 0 36 36"><circle cx="14.8" cy="8.9" r="6.3" fill="none" stroke="#ced0d6" stroke-width="2.4" stroke-linecap="round" stroke-linejoin="round" stroke-width="2.6"/><rect x="2.3" y="21.3" width="12" height="12" rx="1.5" fill="none" stroke="#ced0d6" stroke-width="2.4" stroke-linecap="round" stroke-linejoin="round" stroke-width="2.6"/><path d="M20 28.3 L26 18 L32 28.3 Z" fill="none" stroke="#ced0d6" stroke-width="2.4" stroke-linecap="round" stroke-linejoin="round" stroke-width="2.6"/></svg>
<svg class="ic" style="left:22px;top:209px" width="36" height="14" viewBox="0 0 36 14"><circle cx="4.9" cy="7" r="3" fill="#ced0d6"/><circle cx="17.8" cy="7" r="3" fill="#ced0d6"/><circle cx="30.8" cy="7" r="3" fill="#ced0d6"/></svg>
<svg class="ic" style="left:20px;top:1037px" width="40" height="32" viewBox="0 0 40 32"><path d="M10 3 H30 L37 12 L20 30 L3 12 Z M3 12 H37 M14 3 L11 12 L20 30 L29 12 L26 3" fill="none" stroke="#ced0d6" stroke-width="2.4" stroke-linecap="round" stroke-linejoin="round"/></svg>
<svg class="ic" style="left:21px;top:1120px" width="38" height="32" viewBox="0 0 38 32"><path d="M14 5 L19 11 H28 L33 5 V26 C33 28 32 29 30 29 H17 C15 29 14 28 14 26 Z" fill="none" stroke="#ced0d6" stroke-width="2.4" stroke-linecap="round" stroke-linejoin="round"/><path d="M3 13 H11 M4 19 H11 M6 25 H11" fill="none" stroke="#ced0d6" stroke-width="2.4" stroke-linecap="round" stroke-linejoin="round"/><circle cx="20" cy="18" r="1.6" fill="#ced0d6"/><circle cx="27" cy="18" r="1.6" fill="#ced0d6"/><path d="M22 23 L23.5 24.5 L25 23" fill="none" stroke="#ced0d6" stroke-width="2.4" stroke-linecap="round" stroke-linejoin="round" stroke-width="1.8"/></svg>
<svg class="ic" style="left:21px;top:1195px" width="38" height="38" viewBox="0 0 38 38"><circle cx="19" cy="19" r="16.5" fill="none" stroke="#ced0d6" stroke-width="2.4" stroke-linecap="round" stroke-linejoin="round"/><path d="M19 10 V20" fill="none" stroke="#ced0d6" stroke-width="2.4" stroke-linecap="round" stroke-linejoin="round" stroke-width="3.6"/><circle cx="19" cy="27" r="2.4" fill="#ced0d6"/></svg>
<svg class="ic" style="left:21px;top:1276px" width="38" height="36" viewBox="0 0 38 36"><rect x="3" y="3" width="32" height="30" rx="2" fill="none" stroke="#ced0d6" stroke-width="2.4" stroke-linecap="round" stroke-linejoin="round"/><path d="M10 12 L16 17 L10 22" fill="none" stroke="#ced0d6" stroke-width="2.4" stroke-linecap="round" stroke-linejoin="round"/><path d="M19 25 H27" fill="none" stroke="#ced0d6" stroke-width="2.4" stroke-linecap="round" stroke-linejoin="round"/></svg>
<svg class="ic" style="left:22px;top:1354px" width="36" height="38" viewBox="0 0 36 38"><circle cx="8" cy="8" r="5.5" fill="none" stroke="#ced0d6" stroke-width="2.4" stroke-linecap="round" stroke-linejoin="round"/><circle cx="25" cy="12" r="5.5" fill="none" stroke="#ced0d6" stroke-width="2.4" stroke-linecap="round" stroke-linejoin="round"/><path d="M8 14 V36 M8 27 H19 C23 27 25 24 25 20 V18" fill="none" stroke="#ced0d6" stroke-width="2.4" stroke-linecap="round" stroke-linejoin="round"/></svg>
<svg class="ic" style="left:724px;top:36px" width="36" height="40" viewBox="0 0 36 40"><path d="M4 31 L8 25 V16 C8 9 12 5 18 5 C24 5 28 9 28 16 V25 L32 31 Z" fill="none" stroke="#ced0d6" stroke-width="2.4" stroke-linecap="round" stroke-linejoin="round"/><path d="M14 35 C15 37 21 37 22 35" fill="#ced0d6" stroke="#ced0d6" stroke-width="2"/></svg>
<svg class="ic" style="left:725px;top:118px" width="38" height="38" viewBox="0 0 38 38"><path d="M12 35 H6 C4 35 3 34 3 32 V6 C3 4 4 3 6 3 H19 C21 3 22 4 22 6 V19" fill="none" stroke="#ced0d6" stroke-width="2.4" stroke-linecap="round" stroke-linejoin="round"/><path d="M10 9 H15" fill="none" stroke="#ced0d6" stroke-width="2.4" stroke-linecap="round" stroke-linejoin="round"/><path d="M15 35 C15 27 20 23 26 23 C32 23 36 27 36 35 Z" fill="none" stroke="#ced0d6" stroke-width="2.4" stroke-linecap="round" stroke-linejoin="round"/><path d="M19 22 L17 19 M33 22 L35 19" fill="none" stroke="#ced0d6" stroke-width="2.4" stroke-linecap="round" stroke-linejoin="round"/></svg>
<div class="a" style="left:712px;top:186px;width:60px;height:60px;border-radius:12px;background:#4b4c50"></div>
<svg class="ic" style="left:726px;top:196px" width="40" height="40" viewBox="0 0 40 40"><path d="M9 30 H5 C3.5 30 3 29 3 28 V7 C3 5.5 4 5 5 5 H18 L20 8 V11" fill="none" stroke="#ced0d6" stroke-width="2.4" stroke-linecap="round" stroke-linejoin="round"/><path d="M9 10 H13" fill="none" stroke="#ced0d6" stroke-width="2.4" stroke-linecap="round" stroke-linejoin="round"/><rect x="13" y="17" width="20" height="11" rx="1" fill="none" stroke="#ced0d6" stroke-width="2.4" stroke-linecap="round" stroke-linejoin="round"/><path d="M10 34 H36" fill="none" stroke="#ced0d6" stroke-width="2.4" stroke-linecap="round" stroke-linejoin="round"/></svg>
<div class="a" style="left:749px;top:196px;width:14px;height:14px;border-radius:50%;background:#5fb865"></div>
<svg class="ic" style="left:724px;top:277px" width="38" height="38" viewBox="0 0 38 38"><path d="M19 2 C20 12 24 17 36 19 C24 21 20 26 19 36 C18 26 14 21 2 19 C14 17 18 12 19 2 Z" fill="#ced0d6"/></svg>
<div class="a" style="left:717px;top:346px;width:49px;height:2px;background:#43454a"></div>
<svg class="ic" style="left:725px;top:380px" width="40" height="40" viewBox="0 0 40 40"><path d="M15 35 H6 C4 35 3 34 3 32 V6 C3 4 4 3 6 3 H19 C21 3 22 4 22 6 V17" fill="none" stroke="#ced0d6" stroke-width="2.4" stroke-linecap="round" stroke-linejoin="round"/><path d="M10 9 H15" fill="none" stroke="#ced0d6" stroke-width="2.4" stroke-linecap="round" stroke-linejoin="round"/><circle cx="26" cy="26" r="6.5" fill="none" stroke="#ced0d6" stroke-width="2.4" stroke-linecap="round" stroke-linejoin="round"/><path d="M31 31 L36 36" fill="none" stroke="#ced0d6" stroke-width="2.4" stroke-linecap="round" stroke-linejoin="round"/></svg>
<svg class="ic" style="left:438px;top:44px" width="30" height="32" viewBox="0 0 30 32"><path d="M8 26 H4 C3 26 2 25 2 24 V4 C2 3 3 2 4 2 H16 C17 2 18 3 18 4 V12" fill="none" stroke="#ced0d6" stroke-width="2.2"/><path d="M8 7 H12" stroke="#ced0d6" stroke-width="2.2"/></svg>
<svg class="ic" style="left:446px;top:56px" width="22" height="18" viewBox="0 0 22 18"><rect x="2" y="2" width="16" height="10" rx="1" fill="none" stroke="#b07ef2" stroke-width="2.2"/><path d="M2 15.5 H13" stroke="#b07ef2" stroke-width="2.2"/></svg>
<div class="a" style="left:457px;top:65px;width:10px;height:10px;border-radius:50%;background:#21d321;box-shadow:0 1px 2px #000"></div>
<svg class="ic" style="left:477px;top:43px" width="28" height="28" viewBox="0 0 28 28"><path d="M14 1 V27 M1 14 H27" stroke="#ced0d6" stroke-width="2"/></svg>
<svg class="ic" style="left:540px;top:44px" width="28" height="28" viewBox="0 0 28 28"><rect x="3" y="3" width="22" height="22" fill="none" stroke="#ced0d6" stroke-width="2.2"/><rect x="3" y="3" width="22" height="7" fill="#b9bbc0"/></svg>
<svg class="ic" style="left:601px;top:44px" width="10" height="30" viewBox="0 0 10 30"><circle cx="5" cy="4" r="2.6" fill="#ced0d6"/><circle cx="5" cy="14" r="2.6" fill="#ced0d6"/><circle cx="5" cy="24" r="2.6" fill="#ced0d6"/></svg>
<svg class="ic" style="left:644px;top:55px" width="28" height="6" viewBox="0 0 28 6"><path d="M1 3 H27" stroke="#ced0d6" stroke-width="2.2"/></svg>
<svg class="ic" style="left:170px;top:120px" width="28" height="30" viewBox="0 0 28 30"><path d="M8.5 7 A11 11 0 1 0 19.5 7" fill="none" stroke="#ced0d6" stroke-width="2"/><path d="M14 2 V14" stroke="#ced0d6" stroke-width="2"/></svg>
<svg class="ic" style="left:220px;top:120px" width="30" height="30" viewBox="0 0 30 30"><path d="M2 10 H8 L16 3 V27 L8 20 H2 Z" fill="none" stroke="#ced0d6" stroke-width="2" stroke-linejoin="round"/><path d="M20 10 C22 12.5 22 17.5 20 20 M24 6 C28 10 28 20 24 24" fill="none" stroke="#ced0d6" stroke-width="2"/></svg>
<svg class="ic" style="left:272px;top:120px" width="26" height="30" viewBox="0 0 26 30"><path d="M2 10 H8 L16 3 V27 L8 20 H2 Z" fill="none" stroke="#ced0d6" stroke-width="2" stroke-linejoin="round"/><path d="M20 10 C22 12.5 22 17.5 20 20" fill="none" stroke="#ced0d6" stroke-width="2"/></svg>
<div class="a" style="left:320px;top:114px;width:2px;height:40px;background:#4e5157"></div>
<svg class="ic" style="left:338px;top:120px" width="34" height="30" viewBox="0 0 34 30"><rect x="2" y="3" width="16" height="24" rx="1.5" fill="none" stroke="#ced0d6" stroke-width="2"/><path d="M8 7 H11" stroke="#ced0d6" stroke-width="2"/><path d="M21 4 C30 8 30 22 21 26" fill="none" stroke="#548af7" stroke-width="2"/><path d="M21 9 V3 H27" fill="none" stroke="#548af7" stroke-width="2"/></svg>
<svg class="ic" style="left:388px;top:120px" width="34" height="30" viewBox="0 0 34 30"><rect x="16" y="3" width="16" height="24" rx="1.5" fill="none" stroke="#ced0d6" stroke-width="2"/><path d="M23 7 H26" stroke="#ced0d6" stroke-width="2"/><path d="M13 4 C4 8 4 22 13 26" fill="none" stroke="#548af7" stroke-width="2"/><path d="M13 9 V3 H7" fill="none" stroke="#548af7" stroke-width="2"/></svg>
<div class="a" style="left:438px;top:114px;width:2px;height:40px;background:#4e5157"></div>
<svg class="ic" style="left:462px;top:122px" width="22" height="24" viewBox="0 0 22 24"><path d="M2 12 L18 3 V21 Z" fill="none" stroke="#ced0d6" stroke-width="2" stroke-linejoin="round"/></svg>
<svg class="ic" style="left:511px;top:121px" width="26" height="26" viewBox="0 0 26 26"><circle cx="13" cy="13" r="10" fill="none" stroke="#ced0d6" stroke-width="2"/></svg>
<svg class="ic" style="left:579px;top:124px" width="16" height="20" viewBox="0 0 16 20"><path d="M3 2 L12 10 L3 18" fill="none" stroke="#ced0d6" stroke-width="2"/></svg>
<svg class="ic" style="left:644px;top:120px" width="34" height="32" viewBox="0 0 34 32"><path d="M2 16 V4 C2 3 3 2 4 2 H23" fill="none" stroke="#ced0d6" stroke-width="2"/><path d="M15 26 H8 C7 26 6 25 6 24 V8 C6 7 7 6 8 6 H24 C25 6 26 7 26 8 V14" fill="none" stroke="#ced0d6" stroke-width="2"/><circle cx="22" cy="22" r="5" fill="none" stroke="#ced0d6" stroke-width="2"/><path d="M26 26 L31 31" stroke="#ced0d6" stroke-width="2"/></svg>
<div class="a" style="left:144px;top:174px;width:556px;height:1235px;overflow:hidden;background:linear-gradient(180deg,#798d94 0px,#7f9298 150px,#86979c 320px,#8b9c9f 440px,#8d9ea0 503px,#8e8d66 503px,#868e62 560px,#7b8a56 640px,#70834f 760px,#627547 950px,#56663c 1120px,#485532 1235px)">
<div class="a" style="left:100px;top:16px;width:380px;height:220px;border-radius:50%;background:#72878f;filter:blur(45px);opacity:0.55;transform:rotate(0deg)"></div>
<div class="a" style="left:410px;top:116px;width:200px;height:260px;border-radius:50%;background:#97a4a6;filter:blur(40px);opacity:0.45;transform:rotate(0deg)"></div>
<div class="a" style="left:-40px;top:246px;width:220px;height:200px;border-radius:50%;background:#8c9c9f;filter:blur(35px);opacity:0.45;transform:rotate(0deg)"></div>
<div class="a" style="left:90px;top:366px;width:400px;height:120px;border-radius:50%;background:#93a2a2;filter:blur(30px);opacity:0.4;transform:rotate(0deg)"></div>
<div class="a" style="left:28px;top:6px;width:4px;height:500px;border-radius:2px;background:#8fa08a;filter:blur(2px);opacity:0.6;transform:rotate(0deg)"></div>
<div class="a" style="left:116px;top:336px;width:4px;height:180px;border-radius:2px;background:#8a9c88;filter:blur(2px);opacity:0.6;transform:rotate(0deg)"></div>
<div class="a" style="left:218px;top:421px;width:4px;height:90px;border-radius:2px;background:#8fa08a;filter:blur(2px);opacity:0.6;transform:rotate(0deg)"></div>
<div class="a" style="left:88px;top:386px;width:4px;height:120px;border-radius:2px;background:#8c9c8e;filter:blur(2px);opacity:0.6;transform:rotate(0deg)"></div>
<div class="a" style="left:109px;top:335px;width:16px;height:42px;border-radius:50%;background:#a9b698;filter:blur(3px);opacity:0.7;transform:rotate(0deg)"></div>
<div class="a" style="left:211px;top:427px;width:22px;height:44px;border-radius:50%;background:#adb89c;filter:blur(3px);opacity:0.7;transform:rotate(0deg)"></div>
<div class="a" style="left:19px;top:426px;width:14px;height:30px;border-radius:50%;background:#aab3a0;filter:blur(3px);opacity:0.7;transform:rotate(0deg)"></div>
<div class="a" style="left:87px;top:385px;width:12px;height:26px;border-radius:50%;background:#97a690;filter:blur(3px);opacity:0.7;transform:rotate(0deg)"></div>
<div class="a" style="left:130px;top:396px;width:14px;height:40px;border-radius:50%;background:#94a38c;filter:blur(3px);opacity:0.7;transform:rotate(0deg)"></div>
<div class="a" style="left:360px;top:335px;width:8px;height:22px;border-radius:50%;background:#7f9890;filter:blur(3px);opacity:0.7;transform:rotate(0deg)"></div>
<div class="a" style="left:0;top:503px;width:556px;height:90px;background:linear-gradient(180deg,rgba(170,110,70,0.12),rgba(140,140,80,0))"></div>
<div class="a" style="left:-10px;top:508px;width:120px;height:36px;border-radius:50%;background:#c0503a;filter:blur(10px);opacity:0.6;transform:rotate(0deg)"></div>
<div class="a" style="left:470px;top:506px;width:100px;height:40px;border-radius:50%;background:#b8503a;filter:blur(10px);opacity:0.5;transform:rotate(0deg)"></div>
<div class="a" style="left:173px;top:532px;width:14px;height:51px;border-radius:6px;background:#a9b496;filter:blur(3px);opacity:0.33;transform:rotate(0deg)"></div>
<div class="a" style="left:319px;top:514px;width:10px;height:104px;border-radius:6px;background:#a9b496;filter:blur(3px);opacity:0.32;transform:rotate(0deg)"></div>
<div class="a" style="left:43px;top:539px;width:15px;height:70px;border-radius:6px;background:#a9b496;filter:blur(3px);opacity:0.49;transform:rotate(0deg)"></div>
<div class="a" style="left:316px;top:530px;width:16px;height:44px;border-radius:6px;background:#a9b496;filter:blur(3px);opacity:0.31;transform:rotate(0deg)"></div>
<div class="a" style="left:472px;top:512px;width:11px;height:60px;border-radius:6px;background:#a9b496;filter:blur(3px);opacity:0.47;transform:rotate(0deg)"></div>
<div class="a" style="left:375px;top:529px;width:9px;height:47px;border-radius:6px;background:#9fae8c;filter:blur(3px);opacity:0.46;transform:rotate(0deg)"></div>
<div class="a" style="left:29px;top:514px;width:11px;height:44px;border-radius:6px;background:#8ea57a;filter:blur(3px);opacity:0.53;transform:rotate(0deg)"></div>
<div class="a" style="left:252px;top:520px;width:14px;height:105px;border-radius:6px;background:#9fae8c;filter:blur(3px);opacity:0.51;transform:rotate(0deg)"></div>
<div class="a" style="left:129px;top:527px;width:13px;height:80px;border-radius:6px;background:#b0b8a0;filter:blur(3px);opacity:0.39;transform:rotate(0deg)"></div>
<div class="a" style="left:541px;top:523px;width:7px;height:48px;border-radius:6px;background:#b0b8a0;filter:blur(3px);opacity:0.45;transform:rotate(0deg)"></div>
<div class="a" style="left:15px;top:536px;width:14px;height:87px;border-radius:6px;background:#a07a52;filter:blur(3px);opacity:0.55;transform:rotate(0deg)"></div>
<div class="a" style="left:186px;top:526px;width:6px;height:65px;border-radius:6px;background:#b8804e;filter:blur(3px);opacity:0.33;transform:rotate(0deg)"></div>
<div class="a" style="left:144px;top:508px;width:13px;height:89px;border-radius:6px;background:#8ea57a;filter:blur(3px);opacity:0.49;transform:rotate(0deg)"></div>
<div class="a" style="left:545px;top:517px;width:15px;height:98px;border-radius:6px;background:#b8804e;filter:blur(3px);opacity:0.4;transform:rotate(0deg)"></div>
<div class="a" style="left:520px;top:530px;width:6px;height:65px;border-radius:6px;background:#b8804e;filter:blur(3px);opacity:0.53;transform:rotate(0deg)"></div>
<div class="a" style="left:69px;top:522px;width:6px;height:57px;border-radius:6px;background:#b8804e;filter:blur(3px);opacity:0.43;transform:rotate(0deg)"></div>
<div class="a" style="left:301px;top:539px;width:8px;height:102px;border-radius:6px;background:#a07a52;filter:blur(3px);opacity:0.42;transform:rotate(0deg)"></div>
<div class="a" style="left:196px;top:544px;width:6px;height:102px;border-radius:6px;background:#9fae8c;filter:blur(3px);opacity:0.35;transform:rotate(0deg)"></div>
<div class="a" style="left:362px;top:539px;width:8px;height:41px;border-radius:6px;background:#9fae8c;filter:blur(3px);opacity:0.3;transform:rotate(0deg)"></div>
<div class="a" style="left:226px;top:529px;width:13px;height:66px;border-radius:6px;background:#9fae8c;filter:blur(3px);opacity:0.45;transform:rotate(0deg)"></div>
<div class="a" style="left:336px;top:508px;width:14px;height:87px;border-radius:6px;background:#8ea57a;filter:blur(3px);opacity:0.42;transform:rotate(0deg)"></div>
<div class="a" style="left:218px;top:531px;width:7px;height:47px;border-radius:6px;background:#a9b496;filter:blur(3px);opacity:0.6;transform:rotate(0deg)"></div>
<div class="a" style="left:242px;top:530px;width:5px;height:48px;border-radius:6px;background:#a9b496;filter:blur(3px);opacity:0.35;transform:rotate(0deg)"></div>
<div class="a" style="left:50px;top:507px;width:12px;height:65px;border-radius:6px;background:#9fae8c;filter:blur(3px);opacity:0.34;transform:rotate(0deg)"></div>
<div class="a" style="left:137px;top:521px;width:6px;height:64px;border-radius:6px;background:#a9b496;filter:blur(3px);opacity:0.45;transform:rotate(0deg)"></div>
<div class="a" style="left:541px;top:518px;width:6px;height:74px;border-radius:6px;background:#9fae8c;filter:blur(3px);opacity:0.4;transform:rotate(0deg)"></div>
<div class="a" style="left:144px;top:512px;width:7px;height:98px;border-radius:6px;background:#a9b496;filter:blur(3px);opacity:0.59;transform:rotate(0deg)"></div>
<div class="a" style="left:197px;top:543px;width:8px;height:88px;border-radius:6px;background:#a07a52;filter:blur(3px);opacity:0.49;transform:rotate(0deg)"></div>
<div class="a" style="left:46px;top:527px;width:9px;height:99px;border-radius:6px;background:#9fae8c;filter:blur(3px);opacity:0.37;transform:rotate(0deg)"></div>
<div class="a" style="left:294px;top:532px;width:14px;height:75px;border-radius:6px;background:#a07a52;filter:blur(3px);opacity:0.6;transform:rotate(0deg)"></div>
<div class="a" style="left:467px;top:539px;width:14px;height:96px;border-radius:6px;background:#8ea57a;filter:blur(3px);opacity:0.36;transform:rotate(0deg)"></div>
<div class="a" style="left:269px;top:546px;width:10px;height:91px;border-radius:6px;background:#b0b8a0;filter:blur(3px);opacity:0.36;transform:rotate(0deg)"></div>
<div class="a" style="left:328px;top:538px;width:16px;height:64px;border-radius:6px;background:#8ea57a;filter:blur(3px);opacity:0.59;transform:rotate(0deg)"></div>
<div class="a" style="left:198px;top:515px;width:9px;height:55px;border-radius:6px;background:#9fae8c;filter:blur(3px);opacity:0.44;transform:rotate(0deg)"></div>
<div class="a" style="left:541px;top:517px;width:13px;height:263px;border-radius:6px;background:#4e6238;filter:blur(5.12921153639236px);opacity:0.57;transform:rotate(-2.5deg)"></div>
<div class="a" style="left:411px;top:627px;width:12px;height:223px;border-radius:6px;background:#5c7040;filter:blur(4.973410843217284px);opacity:0.44;transform:rotate(-2.7deg)"></div>
<div class="a" style="left:46px;top:1177px;width:3px;height:128px;border-radius:6px;background:#a8bb90;filter:blur(4.383481025108872px);opacity:0.33;transform:rotate(1.5deg)"></div>
<div class="a" style="left:259px;top:602px;width:9px;height:361px;border-radius:6px;background:#4e6238;filter:blur(5.734499220229707px);opacity:0.46;transform:rotate(-7.7deg)"></div>
<div class="a" style="left:239px;top:978px;width:5px;height:342px;border-radius:6px;background:#a8bb90;filter:blur(3.303957231621885px);opacity:0.36;transform:rotate(-4.0deg)"></div>
<div class="a" style="left:297px;top:551px;width:11px;height:330px;border-radius:6px;background:#3f512c;filter:blur(5.670884337370657px);opacity:0.43;transform:rotate(6.4deg)"></div>
<div class="a" style="left:277px;top:835px;width:3px;height:240px;border-radius:6px;background:#9db486;filter:blur(2.59920993960937px);opacity:0.37;transform:rotate(-1.0deg)"></div>
<div class="a" style="left:77px;top:588px;width:4px;height:266px;border-radius:6px;background:#5c7040;filter:blur(2.424437668419713px);opacity:0.54;transform:rotate(2.9deg)"></div>
<div class="a" style="left:306px;top:697px;width:11px;height:155px;border-radius:6px;background:#4e6238;filter:blur(4.4501115373778415px);opacity:0.43;transform:rotate(0.1deg)"></div>
<div class="a" style="left:277px;top:941px;width:8px;height:234px;border-radius:6px;background:#a8bb90;filter:blur(5.506141927122373px);opacity:0.35;transform:rotate(0.5deg)"></div>
<div class="a" style="left:517px;top:880px;width:13px;height:158px;border-radius:6px;background:#9db486;filter:blur(3.263919176833215px);opacity:0.27;transform:rotate(5.4deg)"></div>
<div class="a" style="left:370px;top:649px;width:6px;height:209px;border-radius:6px;background:#44572f;filter:blur(5.531331334628302px);opacity:0.34;transform:rotate(-6.0deg)"></div>
<div class="a" style="left:534px;top:1142px;width:7px;height:146px;border-radius:6px;background:#56693e;filter:blur(3.7260872719905556px);opacity:0.35;transform:rotate(-0.2deg)"></div>
<div class="a" style="left:283px;top:641px;width:7px;height:182px;border-radius:6px;background:#96ad7c;filter:blur(4.812605500760137px);opacity:0.29;transform:rotate(3.6deg)"></div>
<div class="a" style="left:207px;top:697px;width:14px;height:235px;border-radius:6px;background:#56693e;filter:blur(2.4191183770913263px);opacity:0.59;transform:rotate(-6.2deg)"></div>
<div class="a" style="left:145px;top:1049px;width:6px;height:92px;border-radius:6px;background:#8fa878;filter:blur(4.146395561670408px);opacity:0.28;transform:rotate(-5.9deg)"></div>
<div class="a" style="left:283px;top:718px;width:6px;height:228px;border-radius:6px;background:#9db486;filter:blur(2.0673268924486488px);opacity:0.24;transform:rotate(4.8deg)"></div>
<div class="a" style="left:47px;top:912px;width:5px;height:158px;border-radius:6px;background:#9db486;filter:blur(4.21225647383214px);opacity:0.26;transform:rotate(-3.8deg)"></div>
<div class="a" style="left:511px;top:600px;width:9px;height:160px;border-radius:6px;background:#a8bb90;filter:blur(2.724583870225198px);opacity:0.24;transform:rotate(-4.2deg)"></div>
<div class="a" style="left:516px;top:832px;width:5px;height:269px;border-radius:6px;background:#44572f;filter:blur(2.072652429178327px);opacity:0.4;transform:rotate(-0.9deg)"></div>
<div class="a" style="left:135px;top:1020px;width:9px;height:85px;border-radius:6px;background:#b4c39c;filter:blur(5.275680561366856px);opacity:0.21;transform:rotate(-5.0deg)"></div>
<div class="a" style="left:237px;top:1030px;width:7px;height:229px;border-radius:6px;background:#56693e;filter:blur(5.329146173057798px);opacity:0.4;transform:rotate(0.1deg)"></div>
<div class="a" style="left:389px;top:757px;width:7px;height:271px;border-radius:6px;background:#9db486;filter:blur(5.5194170849202235px);opacity:0.33;transform:rotate(-7.1deg)"></div>
<div class="a" style="left:236px;top:969px;width:7px;height:97px;border-radius:6px;background:#3f512c;filter:blur(3.172233970321342px);opacity:0.37;transform:rotate(0.1deg)"></div>
<div class="a" style="left:252px;top:813px;width:6px;height:127px;border-radius:6px;background:#3f512c;filter:blur(2.137786894013487px);opacity:0.4;transform:rotate(7.4deg)"></div>
<div class="a" style="left:487px;top:636px;width:7px;height:145px;border-radius:6px;background:#a8bb90;filter:blur(5.104952305702881px);opacity:0.24;transform:rotate(-6.7deg)"></div>
<div class="a" style="left:46px;top:598px;width:9px;height:325px;border-radius:6px;background:#a8bb90;filter:blur(5.830548719441579px);opacity:0.2;transform:rotate(-1.7deg)"></div>
<div class="a" style="left:468px;top:1111px;width:12px;height:127px;border-radius:6px;background:#5c7040;filter:blur(4.896623093447303px);opacity:0.34;transform:rotate(1.5deg)"></div>
<div class="a" style="left:351px;top:1087px;width:13px;height:93px;border-radius:6px;background:#3f512c;filter:blur(4.09502913811407px);opacity:0.34;transform:rotate(2.0deg)"></div>
<div class="a" style="left:274px;top:971px;width:12px;height:330px;border-radius:6px;background:#56693e;filter:blur(2.167448405417597px);opacity:0.33;transform:rotate(1.3deg)"></div>
<div class="a" style="left:350px;top:722px;width:8px;height:368px;border-radius:6px;background:#96ad7c;filter:blur(3.957177259439018px);opacity:0.34;transform:rotate(-7.2deg)"></div>
<div class="a" style="left:-3px;top:943px;width:9px;height:319px;border-radius:6px;background:#4e6238;filter:blur(3.8954337016401746px);opacity:0.52;transform:rotate(0.6deg)"></div>
<div class="a" style="left:444px;top:648px;width:11px;height:334px;border-radius:6px;background:#5c7040;filter:blur(3.53024190892994px);opacity:0.45;transform:rotate(-4.3deg)"></div>
<div class="a" style="left:261px;top:967px;width:10px;height:285px;border-radius:6px;background:#a8bb90;filter:blur(4.606137446857012px);opacity:0.26;transform:rotate(2.3deg)"></div>
<div class="a" style="left:381px;top:596px;width:8px;height:266px;border-radius:6px;background:#4e6238;filter:blur(4.702830627251098px);opacity:0.51;transform:rotate(-0.2deg)"></div>
<div class="a" style="left:158px;top:801px;width:8px;height:235px;border-radius:6px;background:#56693e;filter:blur(2.343417046554516px);opacity:0.39;transform:rotate(-6.1deg)"></div>
<div class="a" style="left:258px;top:565px;width:9px;height:167px;border-radius:6px;background:#5c7040;filter:blur(5.782349107579471px);opacity:0.36;transform:rotate(7.9deg)"></div>
<div class="a" style="left:113px;top:602px;width:9px;height:254px;border-radius:6px;background:#96ad7c;filter:blur(2.4507102579872915px);opacity:0.25;transform:rotate(7.2deg)"></div>
<div class="a" style="left:200px;top:1055px;width:7px;height:229px;border-radius:6px;background:#5c7040;filter:blur(4.908731077334499px);opacity:0.42;transform:rotate(-5.5deg)"></div>
<div class="a" style="left:228px;top:593px;width:7px;height:193px;border-radius:6px;background:#b4c39c;filter:blur(5.7055954395455455px);opacity:0.21;transform:rotate(-2.8deg)"></div>
<div class="a" style="left:393px;top:677px;width:7px;height:350px;border-radius:6px;background:#3f512c;filter:blur(5.7016619571463085px);opacity:0.32;transform:rotate(-1.7deg)"></div>
<div class="a" style="left:418px;top:674px;width:4px;height:336px;border-radius:6px;background:#56693e;filter:blur(3.0629120599103192px);opacity:0.37;transform:rotate(2.6deg)"></div>
<div class="a" style="left:277px;top:763px;width:14px;height:137px;border-radius:6px;background:#5c7040;filter:blur(5.7627971933529665px);opacity:0.57;transform:rotate(6.1deg)"></div>
<div class="a" style="left:300px;top:545px;width:11px;height:296px;border-radius:6px;background:#44572f;filter:blur(5.6476209737890075px);opacity:0.45;transform:rotate(-0.8deg)"></div>
<div class="a" style="left:303px;top:792px;width:6px;height:131px;border-radius:6px;background:#44572f;filter:blur(2.9546600967894876px);opacity:0.42;transform:rotate(-3.9deg)"></div>
<div class="a" style="left:264px;top:586px;width:10px;height:281px;border-radius:6px;background:#5c7040;filter:blur(3.811944303103071px);opacity:0.47;transform:rotate(-6.8deg)"></div>
<div class="a" style="left:181px;top:762px;width:9px;height:308px;border-radius:6px;background:#96ad7c;filter:blur(2.956506322869817px);opacity:0.2;transform:rotate(-4.1deg)"></div>
<div class="a" style="left:138px;top:1052px;width:11px;height:251px;border-radius:6px;background:#96ad7c;filter:blur(3.0809593897522416px);opacity:0.23;transform:rotate(-1.4deg)"></div>
<div class="a" style="left:415px;top:870px;width:7px;height:229px;border-radius:6px;background:#56693e;filter:blur(5.587160535110642px);opacity:0.33;transform:rotate(3.0deg)"></div>
<div class="a" style="left:211px;top:772px;width:6px;height:274px;border-radius:6px;background:#56693e;filter:blur(4.838047139754616px);opacity:0.31;transform:rotate(5.0deg)"></div>
<div class="a" style="left:497px;top:879px;width:3px;height:222px;border-radius:6px;background:#3f512c;filter:blur(5.888964487580967px);opacity:0.56;transform:rotate(-1.7deg)"></div>
<div class="a" style="left:134px;top:620px;width:9px;height:113px;border-radius:6px;background:#5c7040;filter:blur(5.10744646309454px);opacity:0.33;transform:rotate(2.9deg)"></div>
<div class="a" style="left:-1px;top:898px;width:3px;height:118px;border-radius:6px;background:#44572f;filter:blur(3.749722114163098px);opacity:0.46;transform:rotate(3.4deg)"></div>
<div class="a" style="left:418px;top:719px;width:13px;height:110px;border-radius:6px;background:#96ad7c;filter:blur(4.149905273363629px);opacity:0.18;transform:rotate(-4.9deg)"></div>
<div class="a" style="left:548px;top:721px;width:12px;height:164px;border-radius:6px;background:#3f512c;filter:blur(5.842456919306819px);opacity:0.37;transform:rotate(-4.1deg)"></div>
<div class="a" style="left:388px;top:530px;width:8px;height:172px;border-radius:6px;background:#8fa878;filter:blur(3.697289613639141px);opacity:0.23;transform:rotate(2.8deg)"></div>
<div class="a" style="left:200px;top:945px;width:11px;height:228px;border-radius:6px;background:#9db486;filter:blur(4.956516887103012px);opacity:0.37;transform:rotate(-2.2deg)"></div>
<div class="a" style="left:278px;top:1155px;width:6px;height:142px;border-radius:6px;background:#a8bb90;filter:blur(5.557335504738475px);opacity:0.24;transform:rotate(5.1deg)"></div>
<div class="a" style="left:54px;top:880px;width:13px;height:267px;border-radius:6px;background:#4e6238;filter:blur(2.5855322158909897px);opacity:0.58;transform:rotate(-0.2deg)"></div>
<div class="a" style="left:216px;top:1157px;width:5px;height:144px;border-radius:6px;background:#b4c39c;filter:blur(4.848138984548558px);opacity:0.29;transform:rotate(-7.2deg)"></div>
<div class="a" style="left:172px;top:569px;width:5px;height:114px;border-radius:6px;background:#3f512c;filter:blur(2.1275747511335354px);opacity:0.52;transform:rotate(-4.9deg)"></div>
<div class="a" style="left:366px;top:753px;width:7px;height:194px;border-radius:6px;background:#8fa878;filter:blur(3.6807326363180524px);opacity:0.2;transform:rotate(-5.3deg)"></div>
<div class="a" style="left:489px;top:976px;width:7px;height:248px;border-radius:6px;background:#b4c39c;filter:blur(4.821025951905967px);opacity:0.2;transform:rotate(4.3deg)"></div>
<div class="a" style="left:105px;top:788px;width:7px;height:242px;border-radius:6px;background:#b4c39c;filter:blur(4.501633219917655px);opacity:0.24;transform:rotate(3.8deg)"></div>
<div class="a" style="left:219px;top:810px;width:12px;height:193px;border-radius:6px;background:#9db486;filter:blur(3.3562781322888817px);opacity:0.4;transform:rotate(-7.0deg)"></div>
<div class="a" style="left:148px;top:853px;width:6px;height:367px;border-radius:6px;background:#8fa878;filter:blur(4.886288277973305px);opacity:0.25;transform:rotate(3.5deg)"></div>
<div class="a" style="left:329px;top:1055px;width:4px;height:322px;border-radius:6px;background:#b4c39c;filter:blur(3.5460591551601546px);opacity:0.41;transform:rotate(5.2deg)"></div>
<div class="a" style="left:133px;top:825px;width:13px;height:209px;border-radius:6px;background:#44572f;filter:blur(5.09123751972065px);opacity:0.55;transform:rotate(-5.1deg)"></div>
<div class="a" style="left:334px;top:721px;width:7px;height:178px;border-radius:6px;background:#a8bb90;filter:blur(2.639749534347877px);opacity:0.27;transform:rotate(4.5deg)"></div>
<div class="a" style="left:222px;top:801px;width:9px;height:275px;border-radius:6px;background:#9db486;filter:blur(3.0595652647197715px);opacity:0.42;transform:rotate(-5.4deg)"></div>
<div class="a" style="left:41px;top:853px;width:11px;height:109px;border-radius:6px;background:#b4c39c;filter:blur(5.56505023461904px);opacity:0.29;transform:rotate(-0.8deg)"></div>
<div class="a" style="left:125px;top:987px;width:11px;height:242px;border-radius:6px;background:#8fa878;filter:blur(3.4918841497318893px);opacity:0.32;transform:rotate(4.5deg)"></div>
<div class="a" style="left:407px;top:679px;width:6px;height:140px;border-radius:6px;background:#3f512c;filter:blur(2.2592163800021883px);opacity:0.36;transform:rotate(-5.5deg)"></div>
<div class="a" style="left:135px;top:860px;width:10px;height:154px;border-radius:6px;background:#9db486;filter:blur(3.899051036918909px);opacity:0.2;transform:rotate(-6.4deg)"></div>
<div class="a" style="left:454px;top:1032px;width:3px;height:332px;border-radius:6px;background:#a8bb90;filter:blur(5.311700152849966px);opacity:0.32;transform:rotate(-3.3deg)"></div>
<div class="a" style="left:105px;top:864px;width:5px;height:103px;border-radius:6px;background:#4e6238;filter:blur(4.384588262728038px);opacity:0.33;transform:rotate(1.6deg)"></div>
<div class="a" style="left:342px;top:759px;width:5px;height:145px;border-radius:6px;background:#96ad7c;filter:blur(5.655820614202076px);opacity:0.36;transform:rotate(-4.7deg)"></div>
<div class="a" style="left:449px;top:748px;width:7px;height:326px;border-radius:6px;background:#9db486;filter:blur(4.192179336652369px);opacity:0.37;transform:rotate(1.9deg)"></div>
<div class="a" style="left:31px;top:783px;width:9px;height:110px;border-radius:6px;background:#a8bb90;filter:blur(3.0846674862441095px);opacity:0.28;transform:rotate(2.2deg)"></div>
<div class="a" style="left:547px;top:763px;width:4px;height:280px;border-radius:6px;background:#5c7040;filter:blur(5.456985496481138px);opacity:0.42;transform:rotate(3.9deg)"></div>
<div class="a" style="left:549px;top:641px;width:11px;height:189px;border-radius:6px;background:#a8bb90;filter:blur(5.281474324777365px);opacity:0.28;transform:rotate(-4.7deg)"></div>
<div class="a" style="left:223px;top:773px;width:5px;height:345px;border-radius:6px;background:#5c7040;filter:blur(4.488778380370961px);opacity:0.33;transform:rotate(-7.8deg)"></div>
<div class="a" style="left:203px;top:606px;width:6px;height:231px;border-radius:6px;background:#4e6238;filter:blur(5.01422327175181px);opacity:0.42;transform:rotate(0.3deg)"></div>
<div class="a" style="left:434px;top:688px;width:12px;height:321px;border-radius:6px;background:#44572f;filter:blur(5.704671252857677px);opacity:0.32;transform:rotate(-7.3deg)"></div>
<div class="a" style="left:210px;top:860px;width:12px;height:351px;border-radius:6px;background:#56693e;filter:blur(4.4589164211258705px);opacity:0.49;transform:rotate(-5.4deg)"></div>
<div class="a" style="left:108px;top:866px;width:3px;height:222px;border-radius:6px;background:#8fa878;filter:blur(2.9882355919686643px);opacity:0.21;transform:rotate(7.0deg)"></div>
<div class="a" style="left:399px;top:539px;width:9px;height:349px;border-radius:6px;background:#8fa878;filter:blur(4.398079081050559px);opacity:0.21;transform:rotate(4.1deg)"></div>
<div class="a" style="left:302px;top:699px;width:8px;height:268px;border-radius:6px;background:#8fa878;filter:blur(3.753410374485371px);opacity:0.29;transform:rotate(1.3deg)"></div>
<div class="a" style="left:10px;top:808px;width:6px;height:266px;border-radius:6px;background:#5c7040;filter:blur(5.242117419040765px);opacity:0.55;transform:rotate(4.2deg)"></div>
<div class="a" style="left:219px;top:760px;width:7px;height:100px;border-radius:6px;background:#4e6238;filter:blur(2.521083864040405px);opacity:0.31;transform:rotate(4.8deg)"></div>
<div class="a" style="left:509px;top:1037px;width:7px;height:183px;border-radius:8px;background:#3f512c;filter:blur(6.579469960268218px);opacity:0.51;transform:rotate(3.4deg)"></div>
<div class="a" style="left:7px;top:1017px;width:14px;height:133px;border-radius:8px;background:#4e6238;filter:blur(3.774829212773367px);opacity:0.6;transform:rotate(-0.1deg)"></div>
<div class="a" style="left:524px;top:744px;width:15px;height:303px;border-radius:8px;background:#56693e;filter:blur(3.2620648393939757px);opacity:0.44;transform:rotate(3.1deg)"></div>
<div class="a" style="left:80px;top:792px;width:16px;height:299px;border-radius:8px;background:#56693e;filter:blur(4.016645595497427px);opacity:0.59;transform:rotate(-0.2deg)"></div>
<div class="a" style="left:324px;top:804px;width:10px;height:243px;border-radius:8px;background:#56693e;filter:blur(3.728385549886985px);opacity:0.39;transform:rotate(5.2deg)"></div>
<div class="a" style="left:370px;top:747px;width:15px;height:299px;border-radius:8px;background:#4e6238;filter:blur(6.073062912545241px);opacity:0.36;transform:rotate(4.3deg)"></div>
<div class="a" style="left:530px;top:940px;width:14px;height:211px;border-radius:8px;background:#4e6238;filter:blur(4.008126377849418px);opacity:0.48;transform:rotate(4.3deg)"></div>
<div class="a" style="left:405px;top:887px;width:10px;height:194px;border-radius:8px;background:#56693e;filter:blur(4.441005537832643px);opacity:0.54;transform:rotate(-0.7deg)"></div>
<div class="a" style="left:90px;top:712px;width:16px;height:269px;border-radius:8px;background:#44572f;filter:blur(4.240289766765768px);opacity:0.59;transform:rotate(4.4deg)"></div>
<div class="a" style="left:509px;top:984px;width:15px;height:299px;border-radius:8px;background:#56693e;filter:blur(3.597459026902068px);opacity:0.5;transform:rotate(-0.8deg)"></div>
<div class="a" style="left:281px;top:732px;width:9px;height:299px;border-radius:8px;background:#4e6238;filter:blur(3.0891580895898647px);opacity:0.35;transform:rotate(-1.7deg)"></div>
<div class="a" style="left:53px;top:825px;width:13px;height:191px;border-radius:8px;background:#3f512c;filter:blur(3.5349068404491057px);opacity:0.44;transform:rotate(3.9deg)"></div>
<div class="a" style="left:81px;top:1101px;width:14px;height:123px;border-radius:8px;background:#5c7040;filter:blur(3.383218677749295px);opacity:0.51;transform:rotate(4.5deg)"></div>
<div class="a" style="left:432px;top:837px;width:6px;height:200px;border-radius:8px;background:#3f512c;filter:blur(6.570706228921791px);opacity:0.5;transform:rotate(0.9deg)"></div>
<div class="a" style="left:331px;top:921px;width:8px;height:224px;border-radius:8px;background:#4e6238;filter:blur(3.176007928297773px);opacity:0.48;transform:rotate(-1.1deg)"></div>
<div class="a" style="left:129px;top:1087px;width:6px;height:132px;border-radius:8px;background:#3f512c;filter:blur(5.627199648050087px);opacity:0.4;transform:rotate(-1.0deg)"></div>
<div class="a" style="left:283px;top:973px;width:11px;height:249px;border-radius:8px;background:#3f512c;filter:blur(3.698557898657799px);opacity:0.43;transform:rotate(-2.4deg)"></div>
<div class="a" style="left:19px;top:1006px;width:15px;height:298px;border-radius:8px;background:#4e6238;filter:blur(4.500634963644519px);opacity:0.46;transform:rotate(4.9deg)"></div>
<div class="a" style="left:36px;top:774px;width:18px;height:251px;border-radius:8px;background:#44572f;filter:blur(3.929186750770204px);opacity:0.36;transform:rotate(-2.0deg)"></div>
<div class="a" style="left:409px;top:1052px;width:15px;height:259px;border-radius:8px;background:#44572f;filter:blur(5.543463753276699px);opacity:0.52;transform:rotate(2.2deg)"></div>
<div class="a" style="left:502px;top:793px;width:17px;height:314px;border-radius:8px;background:#56693e;filter:blur(3.3416844570650217px);opacity:0.48;transform:rotate(-4.0deg)"></div>
<div class="a" style="left:499px;top:767px;width:8px;height:288px;border-radius:8px;background:#44572f;filter:blur(3.767747905259275px);opacity:0.45;transform:rotate(1.2deg)"></div>
<div class="a" style="left:202px;top:1068px;width:18px;height:290px;border-radius:8px;background:#3f512c;filter:blur(4.8779717824500946px);opacity:0.56;transform:rotate(2.4deg)"></div>
<div class="a" style="left:470px;top:1027px;width:13px;height:207px;border-radius:8px;background:#44572f;filter:blur(6.156809574722233px);opacity:0.45;transform:rotate(1.0deg)"></div>
<div class="a" style="left:311px;top:763px;width:7px;height:154px;border-radius:8px;background:#3f512c;filter:blur(6.71579534297619px);opacity:0.44;transform:rotate(-4.3deg)"></div>
<div class="a" style="left:9px;top:1053px;width:14px;height:128px;border-radius:8px;background:#4e6238;filter:blur(5.947141052683862px);opacity:0.37;transform:rotate(1.1deg)"></div>
<div class="a" style="left:194px;top:1028px;width:17px;height:284px;border-radius:8px;background:#4e6238;filter:blur(6.518858428829677px);opacity:0.54;transform:rotate(2.5deg)"></div>
<div class="a" style="left:210px;top:827px;width:6px;height:169px;border-radius:8px;background:#4e6238;filter:blur(6.300241075498652px);opacity:0.51;transform:rotate(-2.6deg)"></div>
<div class="a" style="left:52px;top:1074px;width:8px;height:140px;border-radius:8px;background:#44572f;filter:blur(4.346063239090602px);opacity:0.42;transform:rotate(-1.8deg)"></div>
<div class="a" style="left:509px;top:1080px;width:17px;height:130px;border-radius:8px;background:#3f512c;filter:blur(5.014949276330554px);opacity:0.56;transform:rotate(1.4deg)"></div>
<div class="a" style="left:10px;top:908px;width:15px;height:203px;border-radius:8px;background:#44572f;filter:blur(4.875766685743912px);opacity:0.36;transform:rotate(0.8deg)"></div>
<div class="a" style="left:393px;top:924px;width:9px;height:286px;border-radius:8px;background:#5c7040;filter:blur(3.0051962293254055px);opacity:0.4;transform:rotate(3.1deg)"></div>
<div class="a" style="left:538px;top:972px;width:12px;height:121px;border-radius:8px;background:#56693e;filter:blur(6.8686247615391505px);opacity:0.5;transform:rotate(5.5deg)"></div>
<div class="a" style="left:278px;top:775px;width:16px;height:236px;border-radius:8px;background:#56693e;filter:blur(4.993262415104837px);opacity:0.38;transform:rotate(1.6deg)"></div>
<div class="a" style="left:37px;top:980px;width:15px;height:278px;border-radius:8px;background:#44572f;filter:blur(4.422468247865094px);opacity:0.45;transform:rotate(-1.3deg)"></div>
<div class="a" style="left:492px;top:1131px;width:6px;height:137px;border-radius:8px;background:#56693e;filter:blur(4.212564118599754px);opacity:0.46;transform:rotate(0.5deg)"></div>
<div class="a" style="left:87px;top:933px;width:17px;height:316px;border-radius:8px;background:#56693e;filter:blur(5.126178341927776px);opacity:0.54;transform:rotate(3.0deg)"></div>
<div class="a" style="left:355px;top:868px;width:8px;height:190px;border-radius:8px;background:#5c7040;filter:blur(5.648400710634469px);opacity:0.54;transform:rotate(-4.0deg)"></div>
<div class="a" style="left:240px;top:932px;width:8px;height:275px;border-radius:8px;background:#5c7040;filter:blur(5.57080372825639px);opacity:0.52;transform:rotate(0.1deg)"></div>
<div class="a" style="left:142px;top:1038px;width:13px;height:271px;border-radius:8px;background:#56693e;filter:blur(6.8990693464154305px);opacity:0.53;transform:rotate(1.2deg)"></div>
<div class="a" style="left:30px;top:606px;width:160px;height:200px;border-radius:50%;background:#8aa068;filter:blur(35px);opacity:0.35;transform:rotate(0deg)"></div>
<div class="a" style="left:340px;top:646px;width:160px;height:260px;border-radius:50%;background:#849a62;filter:blur(35px);opacity:0.3;transform:rotate(0deg)"></div>
<div class="a" style="left:490px;top:836px;width:80px;height:380px;border-radius:50%;background:#8aa068;filter:blur(28px);opacity:0.35;transform:rotate(0deg)"></div>
<div class="a" style="left:245px;top:626px;width:90px;height:500px;border-radius:50%;background:#8ea070;filter:blur(26px);opacity:0.3;transform:rotate(0deg)"></div>
<div class="a" style="left:-15px;top:766px;width:110px;height:420px;border-radius:50%;background:#3a4a2a;filter:blur(30px);opacity:0.6;transform:rotate(0deg)"></div>
<div class="a" style="left:125px;top:676px;width:90px;height:300px;border-radius:50%;background:#42553a;filter:blur(26px);opacity:0.5;transform:rotate(0deg)"></div>
<div class="a" style="left:385px;top:686px;width:90px;height:380px;border-radius:50%;background:#44583a;filter:blur(26px);opacity:0.45;transform:rotate(0deg)"></div>
<div class="a" style="left:130px;top:1116px;width:200px;height:140px;border-radius:50%;background:#3c4c2b;filter:blur(30px);opacity:0.55;transform:rotate(0deg)"></div>
<div class="a" style="left:350px;top:1151px;width:200px;height:110px;border-radius:50%;background:#40512e;filter:blur(30px);opacity:0.55;transform:rotate(0deg)"></div>
<div class="a" style="left:-10px;top:1156px;width:140px;height:100px;border-radius:50%;background:#3f4f2d;filter:blur(30px);opacity:0.5;transform:rotate(0deg)"></div>
<div class="a" style="left:434px;top:364px;width:34px;height:44px;border-radius:50%;background:#b02616;filter:blur(2.5px);opacity:0.9;transform:rotate(0deg)"></div>
<div class="a" style="left:446px;top:379px;width:20.4px;height:24.200000000000003px;border-radius:50%;background:#8e1f14;filter:blur(3.5px);opacity:0.315;transform:rotate(0deg)"></div>
<div class="a" style="left:344px;top:414px;width:36px;height:28px;border-radius:50%;background:#b8301e;filter:blur(3px);opacity:0.9;transform:rotate(0deg)"></div>
<div class="a" style="left:357px;top:424px;width:21.599999999999998px;height:15.400000000000002px;border-radius:50%;background:#8e1f14;filter:blur(4px);opacity:0.315;transform:rotate(0deg)"></div>
<div class="a" style="left:234px;top:452px;width:24px;height:48px;border-radius:50%;background:#b0301c;filter:blur(4px);opacity:0.9;transform:rotate(0deg)"></div>
<div class="a" style="left:242px;top:469px;width:14.399999999999999px;height:26.400000000000002px;border-radius:50%;background:#8e1f14;filter:blur(5px);opacity:0.315;transform:rotate(0deg)"></div>
<div class="a" style="left:171px;top:428px;width:18px;height:40px;border-radius:50%;background:#b87a6a;filter:blur(6px);opacity:0.9;transform:rotate(0deg)"></div>
<div class="a" style="left:177px;top:442px;width:10.799999999999999px;height:22.0px;border-radius:50%;background:#8e1f14;filter:blur(7px);opacity:0.315;transform:rotate(0deg)"></div>
<div class="a" style="left:412px;top:450px;width:16px;height:24px;border-radius:50%;background:#b8574a;filter:blur(6px);opacity:0.9;transform:rotate(0deg)"></div>
<div class="a" style="left:418px;top:458px;width:9.6px;height:13.200000000000001px;border-radius:50%;background:#8e1f14;filter:blur(7px);opacity:0.315;transform:rotate(0deg)"></div>
<div class="a" style="left:438px;top:478px;width:28px;height:40px;border-radius:50%;background:#b43222;filter:blur(4px);opacity:0.9;transform:rotate(0deg)"></div>
<div class="a" style="left:448px;top:492px;width:16.8px;height:22.0px;border-radius:50%;background:#8e1f14;filter:blur(5px);opacity:0.315;transform:rotate(0deg)"></div>
<div class="a" style="left:451px;top:497px;width:60px;height:70px;border-radius:50%;background:#c04a2c;filter:blur(9px);opacity:0.9;transform:rotate(0deg)"></div>
<div class="a" style="left:472px;top:521px;width:36.0px;height:38.5px;border-radius:50%;background:#8e1f14;filter:blur(10px);opacity:0.315;transform:rotate(0deg)"></div>
<div class="a" style="left:156px;top:514px;width:100px;height:80px;border-radius:50%;background:#b03024;filter:blur(10px);opacity:0.9;transform:rotate(0deg)"></div>
<div class="a" style="left:191px;top:542px;width:60.0px;height:44.0px;border-radius:50%;background:#8e1f14;filter:blur(11px);opacity:0.315;transform:rotate(0deg)"></div>
<div class="a" style="left:5px;top:506px;width:60px;height:40px;border-radius:50%;background:#c25a3c;filter:blur(9px);opacity:0.9;transform:rotate(0deg)"></div>
<div class="a" style="left:26px;top:520px;width:36.0px;height:22.0px;border-radius:50%;background:#8e1f14;filter:blur(10px);opacity:0.315;transform:rotate(0deg)"></div>
<div class="a" style="left:57px;top:612px;width:26px;height:48px;border-radius:50%;background:#c8401a;filter:blur(5px);opacity:0.9;transform:rotate(0deg)"></div>
<div class="a" style="left:66px;top:629px;width:15.6px;height:26.400000000000002px;border-radius:50%;background:#8e1f14;filter:blur(6px);opacity:0.315;transform:rotate(0deg)"></div>
<div class="a" style="left:95px;top:580px;width:22px;height:36px;border-radius:50%;background:#c8502a;filter:blur(6px);opacity:0.9;transform:rotate(0deg)"></div>
<div class="a" style="left:103px;top:592px;width:13.2px;height:19.8px;border-radius:50%;background:#8e1f14;filter:blur(7px);opacity:0.315;transform:rotate(0deg)"></div>
<div class="a" style="left:164px;top:625px;width:22px;height:46px;border-radius:50%;background:#c02a14;filter:blur(5px);opacity:0.9;transform:rotate(0deg)"></div>
<div class="a" style="left:172px;top:641px;width:13.2px;height:25.3px;border-radius:50%;background:#8e1f14;filter:blur(6px);opacity:0.315;transform:rotate(0deg)"></div>
<div class="a" style="left:434px;top:641px;width:36px;height:34px;border-radius:50%;background:#c0301c;filter:blur(4px);opacity:0.9;transform:rotate(0deg)"></div>
<div class="a" style="left:447px;top:653px;width:21.599999999999998px;height:18.700000000000003px;border-radius:50%;background:#8e1f14;filter:blur(5px);opacity:0.315;transform:rotate(0deg)"></div>
<div class="a" style="left:372px;top:666px;width:24px;height:44px;border-radius:50%;background:#c8401e;filter:blur(5px);opacity:0.9;transform:rotate(0deg)"></div>
<div class="a" style="left:380px;top:681px;width:14.399999999999999px;height:24.200000000000003px;border-radius:50%;background:#8e1f14;filter:blur(6px);opacity:0.315;transform:rotate(0deg)"></div>
<div class="a" style="left:498px;top:716px;width:56px;height:64px;border-radius:50%;background:#cc2c22;filter:blur(4px);opacity:0.9;transform:rotate(0deg)"></div>
<div class="a" style="left:518px;top:738px;width:33.6px;height:35.2px;border-radius:50%;background:#8e1f14;filter:blur(5px);opacity:0.315;transform:rotate(0deg)"></div>
<div class="a" style="left:88px;top:743px;width:28px;height:56px;border-radius:50%;background:#d0400e;filter:blur(4px);opacity:0.9;transform:rotate(0deg)"></div>
<div class="a" style="left:98px;top:762px;width:16.8px;height:30.800000000000004px;border-radius:50%;background:#8e1f14;filter:blur(5px);opacity:0.315;transform:rotate(0deg)"></div>
<div class="a" style="left:220px;top:846px;width:64px;height:84px;border-radius:50%;background:#cc3410;filter:blur(3px);opacity:0.9;transform:rotate(0deg)"></div>
<div class="a" style="left:242px;top:875px;width:38.4px;height:46.2px;border-radius:50%;background:#8e1f14;filter:blur(4px);opacity:0.315;transform:rotate(0deg)"></div>
<div class="a" style="left:68px;top:878px;width:16px;height:28px;border-radius:50%;background:#c03a14;filter:blur(4px);opacity:0.9;transform:rotate(0deg)"></div>
<div class="a" style="left:74px;top:888px;width:9.6px;height:15.400000000000002px;border-radius:50%;background:#8e1f14;filter:blur(5px);opacity:0.315;transform:rotate(0deg)"></div>
<div class="a" style="left:120px;top:994px;width:16px;height:34px;border-radius:50%;background:#c83a14;filter:blur(3px);opacity:0.9;transform:rotate(0deg)"></div>
<div class="a" style="left:126px;top:1006px;width:9.6px;height:18.700000000000003px;border-radius:50%;background:#8e1f14;filter:blur(4px);opacity:0.315;transform:rotate(0deg)"></div>
<div class="a" style="left:125px;top:1097px;width:36px;height:54px;border-radius:50%;background:#d8400c;filter:blur(3px);opacity:0.9;transform:rotate(0deg)"></div>
<div class="a" style="left:138px;top:1116px;width:21.599999999999998px;height:29.700000000000003px;border-radius:50%;background:#8e1f14;filter:blur(4px);opacity:0.315;transform:rotate(0deg)"></div>
<div class="a" style="left:270px;top:1141px;width:30px;height:50px;border-radius:50%;background:#d8480e;filter:blur(3px);opacity:0.9;transform:rotate(0deg)"></div>
<div class="a" style="left:280px;top:1158px;width:18.0px;height:27.500000000000004px;border-radius:50%;background:#8e1f14;filter:blur(4px);opacity:0.315;transform:rotate(0deg)"></div>
<div class="a" style="left:360px;top:1028px;width:24px;height:60px;border-radius:50%;background:#7a1e30;filter:blur(3px);opacity:0.9;transform:rotate(0deg)"></div>
<div class="a" style="left:368px;top:1049px;width:14.399999999999999px;height:33.0px;border-radius:50%;background:#8e1f14;filter:blur(4px);opacity:0.315;transform:rotate(0deg)"></div>
<div class="a" style="left:365px;top:975px;width:22px;height:34px;border-radius:50%;background:#c8500f;filter:blur(4px);opacity:0.9;transform:rotate(0deg)"></div>
<div class="a" style="left:373px;top:987px;width:13.2px;height:18.700000000000003px;border-radius:50%;background:#8e1f14;filter:blur(5px);opacity:0.315;transform:rotate(0deg)"></div>
<div class="a" style="left:534px;top:842px;width:20px;height:44px;border-radius:50%;background:#c83a14;filter:blur(3px);opacity:0.9;transform:rotate(0deg)"></div>
<div class="a" style="left:541px;top:857px;width:12.0px;height:24.200000000000003px;border-radius:50%;background:#8e1f14;filter:blur(4px);opacity:0.315;transform:rotate(0deg)"></div>
<div class="a" style="left:534px;top:1118px;width:24px;height:56px;border-radius:50%;background:#d8500e;filter:blur(3px);opacity:0.9;transform:rotate(0deg)"></div>
<div class="a" style="left:542px;top:1137px;width:14.399999999999999px;height:30.800000000000004px;border-radius:50%;background:#8e1f14;filter:blur(4px);opacity:0.315;transform:rotate(0deg)"></div>
<div class="a" style="left:10px;top:556px;width:26px;height:40px;border-radius:50%;background:#c04a28;filter:blur(6px);opacity:0.9;transform:rotate(0deg)"></div>
<div class="a" style="left:19px;top:570px;width:15.6px;height:22.0px;border-radius:50%;background:#8e1f14;filter:blur(7px);opacity:0.315;transform:rotate(0deg)"></div>
<div class="a" style="left:376px;top:894px;width:14px;height:24px;border-radius:50%;background:#c05a2a;filter:blur(4px);opacity:0.9;transform:rotate(0deg)"></div>
<div class="a" style="left:381px;top:902px;width:8.4px;height:13.200000000000001px;border-radius:50%;background:#8e1f14;filter:blur(5px);opacity:0.315;transform:rotate(0deg)"></div>
<div class="a" style="left:378px;top:701px;width:14px;height:20px;border-radius:50%;background:#c84a2a;filter:blur(3px);opacity:0.9;transform:rotate(0deg)"></div>
<div class="a" style="left:383px;top:708px;width:8.4px;height:11.0px;border-radius:50%;background:#8e1f14;filter:blur(4px);opacity:0.315;transform:rotate(0deg)"></div>
<div class="a" style="left:375px;top:741px;width:30px;height:60px;border-radius:50%;background:#dcd6c8;filter:blur(3.5px);opacity:0.8;transform:rotate(0deg)"></div>
<div class="a" style="left:247px;top:736px;width:26px;height:50px;border-radius:50%;background:#b8c0b0;filter:blur(3.5px);opacity:0.6;transform:rotate(0deg)"></div>
<div class="a" style="left:178px;top:967px;width:30px;height:64px;border-radius:50%;background:#a9b88a;filter:blur(3.5px);opacity:0.5;transform:rotate(0deg)"></div>
<div class="a" style="left:316px;top:664px;width:18px;height:36px;border-radius:50%;background:#c0c8b4;filter:blur(3.5px);opacity:0.5;transform:rotate(0deg)"></div>
<div class="a" style="left:480px;top:583px;width:16px;height:30px;border-radius:50%;background:#b0b8a0;filter:blur(3.5px);opacity:0.5;transform:rotate(0deg)"></div>
<div class="a" style="left:21px;top:986px;width:18px;height:60px;border-radius:50%;background:#7e9060;filter:blur(3.5px);opacity:0.5;transform:rotate(0deg)"></div>
<div class="a" style="left:225px;top:888px;width:14px;height:36px;border-radius:50%;background:#98a880;filter:blur(3.5px);opacity:0.4;transform:rotate(0deg)"></div>
<div class="ui" style="left:22px;top:6px;font-size:18.5px;color:#ffffff;line-height:22px">6:10</div>
<svg class="ic" style="left:458px;top:7px" width="62" height="18" viewBox="0 0 62 18"><path d="M1 5 C7 -1 15 -1 21 5 L11 16 Z" fill="#fff"/><path d="M39 1 V16 H24 Z" fill="none" stroke="#fff" stroke-width="1.6"/><path d="M39 4 V16 H28 Z" fill="#fff" opacity="0"/><path d="M32 9 L39 2 V16 H25 Z" fill="#fff" opacity="0"/><path d="M24 16 L33 7 V16 Z" fill="#fff"/><rect x="48" y="2" width="11" height="15" rx="1.5" fill="#fff"/><rect x="51" y="0" width="5" height="3" fill="#fff"/></svg>
<svg class="ic" style="left:475px;top:75px" width="34" height="34" viewBox="0 0 34 34"><path d="M2 2L32 32M32 2L2 32" stroke="#fff" stroke-width="4.2"/></svg>
<div class="ui" style="left:0;top:516px;width:556px;text-align:center;font-size:26px;font-weight:bold;color:#ffffff;line-height:32px">Select duration</div>
<div class="a" style="left:82px;top:571px;width:113px;height:54px;border-radius:27px;background:#468cfc;box-shadow:0 2px 3px rgba(0,0,0,0.3);color:#6a55b0;font-size:18.8px;line-height:54px;text-align:center;font-family:'Liberation Sans'">1 min</div>
<div class="a" style="left:222px;top:571px;width:113px;height:54px;border-radius:27px;background:#9e9e9e;box-shadow:0 2px 3px rgba(0,0,0,0.3);color:#6a55b0;font-size:18.8px;line-height:54px;text-align:center;font-family:'Liberation Sans'">2 min</div>
<div class="a" style="left:362px;top:571px;width:113px;height:54px;border-radius:27px;background:#9e9e9e;box-shadow:0 2px 3px rgba(0,0,0,0.3);color:#6a55b0;font-size:18.8px;line-height:54px;text-align:center;font-family:'Liberation Sans'">5 min</div>
<div class="a" style="left:225px;top:663px;width:107px;height:54px;border-radius:27px;background:#f4f0f7;box-shadow:0 2px 3px rgba(0,0,0,0.3);color:#6750a4;font-size:19px;line-height:54px;text-align:center;font-family:'Liberation Sans'">Start</div>
<div class="a" style="left:205px;top:1216px;width:146px;height:5px;border-radius:3px;background:#ffffff"></div>
</div>
<div class="a" style="left:612px;top:1158px;width:56px;height:216px;border-radius:7px;background:#2b2d30;border:1.5px solid #4a4c51"></div>
<svg class="ic" style="left:626px;top:1173px" width="26" height="26" viewBox="0 0 26 26"><path d="M13 1 V25 M1 13 H25" stroke="#dfe1e5" stroke-width="2"/></svg>
<svg class="ic" style="left:626px;top:1237px" width="26" height="4" viewBox="0 0 26 4"><path d="M1 2 H25" stroke="#6f737a" stroke-width="2"/></svg>
<div class="ui" style="left:626px;top:1278px;font-size:20px;font-weight:bold;color:#dfe1e5;line-height:24px">1:1</div>
<svg class="ic" style="left:625px;top:1331px" width="28" height="26" viewBox="0 0 28 26"><rect x="1" y="1" width="26" height="24" rx="3" fill="none" stroke="#6f737a" stroke-width="1.8"/><path d="M7 11 V7 H11 M21 15 V19 H17" fill="none" stroke="#6f737a" stroke-width="1.8"/></svg>
</div>
</body></html>
